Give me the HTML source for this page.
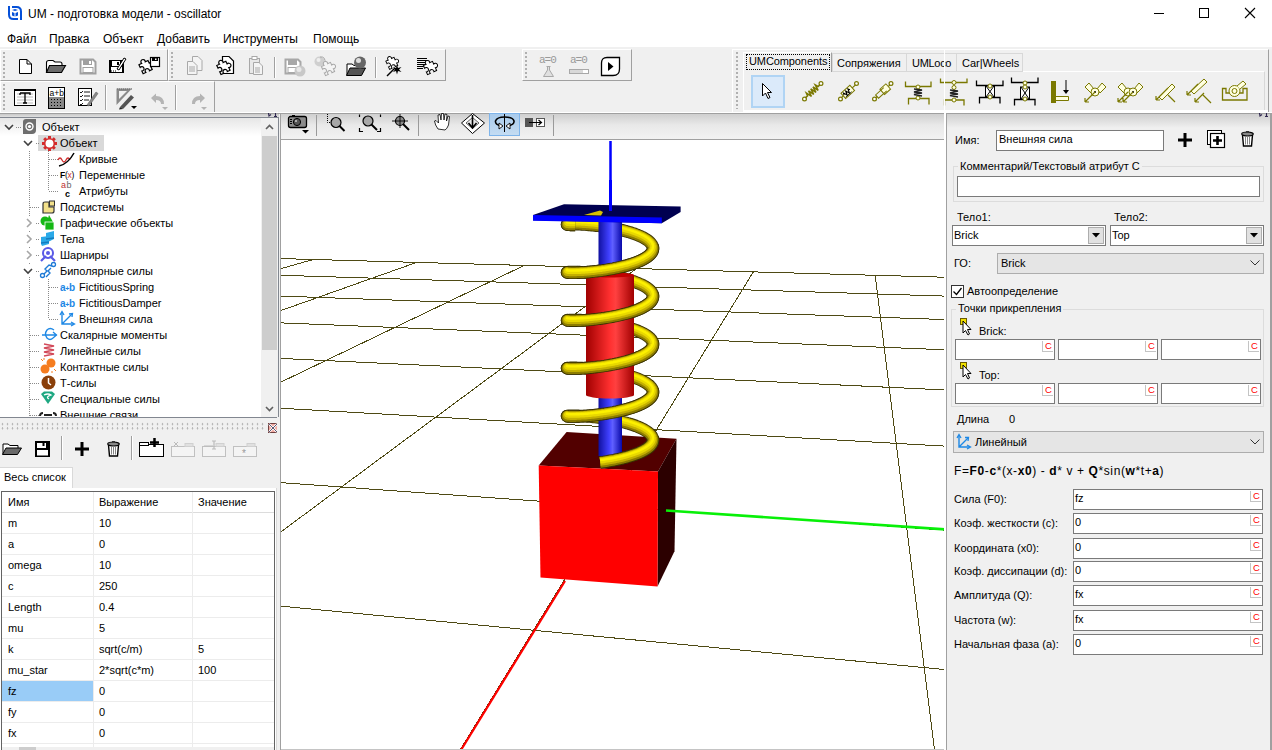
<!DOCTYPE html>
<html><head><meta charset="utf-8">
<style>
*{box-sizing:border-box;margin:0;padding:0}
html,body{width:1272px;height:750px;overflow:hidden;background:#f0f0f0;font-family:"Liberation Sans",sans-serif;font-size:11px;color:#000}
.a{position:absolute}
.t{position:absolute;white-space:nowrap;line-height:13px}
.m{font-size:12px;line-height:14px}
svg{position:absolute;overflow:visible}
.inp{position:absolute;background:#fff;border:1px solid #7a7a7a}
.cc{position:absolute;width:11px;height:11px;border-left:1px solid #c4c4c4;border-bottom:1px solid #c4c4c4;background:#fff;color:#f00;font-size:9.5px;line-height:9px;padding-left:2px}
.sep{position:absolute;width:1px;background:#a0a0a0}
.grip{position:absolute;width:3px;background-image:linear-gradient(#a8a8a8 50%,transparent 50%);background-size:2px 4px}
</style></head><body>

<div class="a" style="left:0;top:0;width:1272px;height:47px;background:#fff"></div>
<svg style="left:8px;top:6px" width="14" height="14" viewBox="0 0 14 14"><path d="M1 0 V8.5 Q1 13 5.5 13 H10" stroke="#0550d8" stroke-width="2" fill="none"/><path d="M4 1 H8.5 Q13 1 13 5.5 V14" stroke="#0550d8" stroke-width="2" fill="none"/><path d="M4 4 L7 3 L10 4 L7 5 Z" fill="#0550d8"/><path d="M4 6 L6.5 7 V10.5 L4 9.5 Z M10 6 L7.5 7 V10.5 L10 9.5 Z" fill="#0550d8"/></svg>
<div class="t m" style="left:28px;top:7px">UM - подготовка модели - oscillator</div>
<svg style="left:1154px;top:13px" width="10" height="1"><rect x="0" y="0" width="10" height="1" fill="#000"/></svg>
<svg style="left:1199px;top:8px" width="10" height="10"><rect x="0.5" y="0.5" width="9" height="9" fill="none" stroke="#000"/></svg>
<svg style="left:1245px;top:8px" width="10" height="10"><path d="M0 0 L10 10 M10 0 L0 10" stroke="#000" stroke-width="1.1"/></svg>
<div class="t m" style="left:7px;top:32px">Файл</div>
<div class="t m" style="left:49px;top:32px">Правка</div>
<div class="t m" style="left:103px;top:32px">Объект</div>
<div class="t m" style="left:157px;top:32px">Добавить</div>
<div class="t m" style="left:223px;top:32px">Инструменты</div>
<div class="t m" style="left:313px;top:32px">Помощь</div>
<div class="a" style="left:0px;top:49px;width:168px;height:32px;background:#f0f0f0;border-top:1px solid #fff;border-left:1px solid #fff;border-bottom:1px solid #a0a0a0;border-right:1px solid #a0a0a0"></div><div class="a" style="left:3px;top:52px;width:2px;height:26px;background-image:linear-gradient(#b0b0b0 50%,transparent 50%);background-size:2px 4px"></div><div class="a" style="left:168px;top:49px;width:278px;height:32px;background:#f0f0f0;border-top:1px solid #fff;border-left:1px solid #fff;border-bottom:1px solid #a0a0a0;border-right:1px solid #a0a0a0"></div><div class="a" style="left:171px;top:52px;width:2px;height:26px;background-image:linear-gradient(#b0b0b0 50%,transparent 50%);background-size:2px 4px"></div><div class="a" style="left:522px;top:49px;width:110px;height:32px;background:#f0f0f0;border-top:1px solid #fff;border-left:1px solid #fff;border-bottom:1px solid #a0a0a0;border-right:1px solid #a0a0a0"></div><div class="a" style="left:525px;top:52px;width:2px;height:26px;background-image:linear-gradient(#b0b0b0 50%,transparent 50%);background-size:2px 4px"></div><div class="a" style="left:0px;top:81px;width:215px;height:32px;background:#f0f0f0;border-top:1px solid #fff;border-left:1px solid #fff;border-bottom:1px solid #a0a0a0;border-right:1px solid #a0a0a0"></div><div class="a" style="left:3px;top:84px;width:2px;height:26px;background-image:linear-gradient(#b0b0b0 50%,transparent 50%);background-size:2px 4px"></div><svg style="left:19px;top:59px" width="13" height="15" viewBox="0 0 13 15"><path d="M0.5 0.5 H8 L12.5 5 V14.5 H0.5 Z" fill="#fff" stroke="#000"/><path d="M8 0.5 V5 H12.5" fill="none" stroke="#000"/></svg><svg style="left:46px;top:60px" width="21" height="13" viewBox="0 0 21 13"><path d="M0.5 12 V2.5 Q0.5 0.5 3 0.5 H7 L9 2 H14 Q16 2 16 4 V6" fill="#fff" stroke="#000" stroke-width="1.1"/><path d="M0.5 12.5 L3.5 5.5 H19.5 L15.5 12.5 Z" fill="#6a6a6a" stroke="#000" stroke-width="1.1"/></svg><svg style="left:80px;top:59px" width="16" height="15" viewBox="0 0 16 15"><path d="M0.5 0.5 H13 L15.5 3 V14.5 H0.5 Z" fill="#fff" stroke="#a0a0a0" stroke-width="2"/><rect x="3" y="1" width="9" height="5" fill="#a0a0a0"/><rect x="9" y="2" width="2" height="3" fill="#fff"/><rect x="3" y="8.5" width="10" height="5" fill="#fff" stroke="#a0a0a0"/></svg><svg style="left:108px;top:56px" width="19" height="18" viewBox="0 0 19 18"><rect x="1" y="4" width="15" height="13" fill="#000"/><rect x="4" y="5" width="8" height="5" fill="#fff"/><rect x="9" y="6" width="2" height="3" fill="#000"/><rect x="3" y="11" width="11" height="5" fill="#fff"/><path d="M3 15 h1 M5 15 h1 M7 15 h1" stroke="#000"/><path d="M9 13 L16 2 L18 3 L11 14 Z" fill="#fff" stroke="#000"/></svg><svg style="left:138px;top:57px" width="23" height="19" viewBox="0 0 23 19"><path d="M3 6 H6 A2.2 2.2 0 1 1 10 6 H13 V9 A2.2 2.2 0 1 1 13 13 V16 H10 A2.2 2.2 0 1 0 6 16 H3 V13 A2.2 2.2 0 1 0 3 9 Z" fill="#fff" stroke="#000" stroke-width="1.2" transform="rotate(-25 8 11) translate(0,-1)"/><rect x="12.5" y="0.5" width="9" height="9" fill="#fff" stroke="#000" stroke-width="1.2"/><rect x="14" y="1" width="6" height="3" fill="#000"/><rect x="17" y="1.5" width="1.5" height="1.5" fill="#fff"/></svg><div class="a" style="left:274px;top:57px;width:1px;height:21px;background:#a0a0a0"></div><div class="a" style="left:275px;top:57px;width:1px;height:21px;background:#fff"></div><div class="a" style="left:375px;top:57px;width:1px;height:21px;background:#a0a0a0"></div><div class="a" style="left:376px;top:57px;width:1px;height:21px;background:#fff"></div><svg style="left:187px;top:56px" width="16" height="19" viewBox="0 0 16 19"><path d="M5.5 0.5 H11 L15 4.5 V14.5 H5.5 Z" fill="#f4f4f4" stroke="#a8a8a8"/><path d="M0.5 5.5 H6 L10 9.5 V18.5 H0.5 Z" fill="#f4f4f4" stroke="#a8a8a8"/><path d="M2 11 h6 M2 13 h6 M2 15 h6" stroke="#a8a8a8"/></svg><svg style="left:215px;top:56px" width="20" height="20" viewBox="0 0 20 20"><path d="M7.5 0.5 H14 L18.5 5 V17.5 H7.5 Z" fill="#fff" stroke="#000" stroke-width="1.2"/><path d="M3 6 H6 A2.2 2.2 0 1 1 10 6 H13 V9 A2.2 2.2 0 1 1 13 13 V16 H10 A2.2 2.2 0 1 0 6 16 H3 V13 A2.2 2.2 0 1 0 3 9 Z" fill="#fff" stroke="#000" stroke-width="1.2" transform="rotate(-25 8 11) translate(0,1)"/></svg><svg style="left:249px;top:56px" width="14" height="19" viewBox="0 0 14 19"><rect x="0.5" y="2.5" width="10" height="15" fill="#e8e8e8" stroke="#a8a8a8"/><rect x="3" y="0.5" width="5" height="3" fill="#fff" stroke="#a8a8a8"/><path d="M4.5 6.5 H10 L13.5 10 V18.5 H4.5 Z" fill="#f4f4f4" stroke="#a8a8a8"/><path d="M6 12 h5 M6 14 h5 M6 16 h5" stroke="#a8a8a8"/></svg><svg style="left:285px;top:59px" width="21" height="18" viewBox="0 0 21 18"><path d="M0.5 0.5 H13 L15.5 3 V14.5 H0.5 Z" fill="#fff" stroke="#a8a8a8" stroke-width="2"/><rect x="3" y="1" width="9" height="5" fill="#a8a8a8"/><rect x="3" y="8.5" width="10" height="5" fill="#fff" stroke="#a8a8a8"/><circle cx="15" cy="12" r="5.5" fill="#c8c8c8"/><circle cx="14" cy="10.5" r="2.5" fill="#e8e8e8"/></svg><svg style="left:314px;top:56px" width="23" height="21" viewBox="0 0 23 21"><circle cx="5.5" cy="5.5" r="5" fill="#cfcfcf"/><circle cx="4.5" cy="4" r="2" fill="#eee"/><path d="M6 1 Q12 0 11 8" fill="none" stroke="#a8a8a8"/><path d="M9 7 L11 11 L13 7" fill="#a8a8a8"/><path d="M3 6 H6 A2.2 2.2 0 1 1 10 6 H13 V9 A2.2 2.2 0 1 1 13 13 V16 H10 A2.2 2.2 0 1 0 6 16 H3 V13 A2.2 2.2 0 1 0 3 9 Z" fill="#f4f4f4" stroke="#a8a8a8" transform="translate(6,2) rotate(-25 8 11)"/></svg><svg style="left:346px;top:56px" width="21" height="20" viewBox="0 0 21 20"><path d="M1 19 L1 8 L6 8 L8 9.5 L12 9.5" fill="#fff" stroke="#000"/><path d="M0.5 19.5 L4 12 L19.5 12 L15.5 19.5 Z" fill="#555" stroke="#000"/><circle cx="14" cy="6.5" r="6" fill="#666"/><circle cx="12.5" cy="4.5" r="2.5" fill="#ddd"/></svg><svg style="left:385px;top:56px" width="19" height="21" viewBox="0 0 19 21"><path d="M3 6 H6 A2.2 2.2 0 1 1 10 6 H13 V9 A2.2 2.2 0 1 1 13 13 V16 H10 A2.2 2.2 0 1 0 6 16 H3 V13 A2.2 2.2 0 1 0 3 9 Z" fill="#fff" stroke="#000" transform="translate(0,-3) rotate(-25 8 11) scale(0.9)"/><path d="M2 20 L10 12" stroke="#000" stroke-width="1.5"/><path d="M12 9 L13 12 L16.5 11 L14 13.5 L16.5 16 L13 15 L12 18.5 L11 15 L8 16 L10 13.5 L8 11 L11 12 Z" fill="#000"/></svg><svg style="left:417px;top:57px" width="21" height="19" viewBox="0 0 21 19"><path d="M0 1.5 h10 M0 3.5 h10 M0 5.5 h10 M0 7.5 h10 M0 9.5 h8 M0 11.5 h6" stroke="#000"/><path d="M3 6 H6 A2.2 2.2 0 1 1 10 6 H13 V9 A2.2 2.2 0 1 1 13 13 V16 H10 A2.2 2.2 0 1 0 6 16 H3 V13 A2.2 2.2 0 1 0 3 9 Z" fill="#fff" stroke="#000" transform="translate(5,0) rotate(-25 8 11)"/></svg><div class="t" style="left:539px;top:55px;font-family:&quot;Liberation Mono&quot;,monospace;font-size:11px;color:#999;letter-spacing:-1px;line-height:11px">a=0</div><svg style="left:543px;top:66px" width="11" height="11" viewBox="0 0 11 11"><path d="M3.5 0.5 h4 M4.5 0.5 V4 L0.5 10.5 H10.5 L6.5 4 V0.5" fill="#e0e0e0" stroke="#a8a8a8"/></svg><div class="t" style="left:570px;top:55px;font-family:&quot;Liberation Mono&quot;,monospace;font-size:11px;color:#999;letter-spacing:-1px;line-height:11px">a=0</div><svg style="left:569px;top:69px" width="20" height="5" viewBox="0 0 20 5"><rect x="0.5" y="0.5" width="19" height="4" fill="#fff" stroke="#a8a8a8"/><rect x="1" y="1" width="13" height="3" fill="#d8d8d8"/></svg><svg style="left:601px;top:57px" width="19" height="19" viewBox="0 0 19 19"><path d="M6 0.5 H18.5 V12 Q18.5 18.5 12 18.5 H0.5 V6 Q0.5 0.5 6 0.5 Z" fill="#fff" stroke="#000" stroke-width="1.3"/><path d="M7 5 L12.5 9.5 L7 14 Z" fill="#000"/></svg><svg style="left:14px;top:89px" width="23" height="18" viewBox="0 0 23 18"><rect x="0.5" y="0.5" width="21" height="16" fill="#fff" stroke="#000"/><rect x="0" y="0" width="22" height="2" fill="#000"/><path d="M3 5 h16 M3 8 h16 M3 11 h16 M3 14 h16" stroke="#bbb"/><path d="M6 4 H16 V6 M6 4 V6 M11 4 V14 M9 14 H13" fill="none" stroke="#000" stroke-width="1.3"/></svg><svg style="left:48px;top:87px" width="18" height="22" viewBox="0 0 18 22"><rect x="0.5" y="0.5" width="16" height="21" fill="#fff" stroke="#000"/><rect x="1" y="10" width="15" height="11" fill="#888"/><text x="1.5" y="9" font-size="8.5" font-family="Liberation Sans">a+b</text><path d="M3 12.5 h1 M6 12.5 h1 M9 12.5 h1 M12 12.5 h1 M3 15.5 h1 M6 15.5 h1 M9 15.5 h1 M12 15.5 h1 M3 18.5 h1 M6 18.5 h1 M9 18.5 h1 M12 18.5 h1" stroke="#000" stroke-width="1.2"/></svg><svg style="left:78px;top:88px" width="21" height="19" viewBox="0 0 21 19"><rect x="0.5" y="0.5" width="13" height="17" fill="#fff" stroke="#000"/><path d="M2 4 l1 1 l2 -2 M2 8 l1 1 l2 -2 M2 12 l1 1 l2 -2 M2 16 l1 1 l2 -2 M6 4 h6 M6 8 h6 M6 12 h5" fill="none" stroke="#000" stroke-width="0.9"/><path d="M9 17 L18 4 L20 5.5 L11 18 Z" fill="#888" stroke="#666" stroke-width="0.6"/></svg><div class="a" style="left:105px;top:85px;width:1px;height:25px;background:#a0a0a0"></div><div class="a" style="left:106px;top:85px;width:1px;height:25px;background:#fff"></div><svg style="left:116px;top:88px" width="22" height="22" viewBox="0 0 22 22"><path d="M0.5 0.5 H16 L0.5 17 Z" fill="#8a8a8a"/><path d="M3 3 H11 L3 11 Z" fill="#f0f0f0"/><path d="M1 1 h15" stroke="#666" stroke-dasharray="1 1"/><path d="M4 19 L15 7 L18 9.5 L7 21 Z" fill="#555"/><path d="M4 19 L3 21.5 L7 21 Z" fill="#222"/><path d="M15 18 h6 l-3 3 z" fill="#000"/></svg><svg style="left:149px;top:93px" width="20" height="17" viewBox="0 0 20 17"><path d="M2 5 L7 0.5 L7 3 Q15 3 15 11 L12 11 Q12 7 7 7 L7 10 Z" fill="#b4b4b4"/><path d="M13 14 h6 l-3 3 z" fill="#b4b4b4"/></svg><div class="a" style="left:175px;top:85px;width:1px;height:25px;background:#a0a0a0"></div><div class="a" style="left:176px;top:85px;width:1px;height:25px;background:#fff"></div><svg style="left:188px;top:93px" width="20" height="17" viewBox="0 0 20 17"><path d="M17 5 L12 0.5 L12 3 Q4 3 4 11 L7 11 Q7 7 12 7 L12 10 Z" fill="#b4b4b4"/><path d="M13 14 h6 l-3 3 z" fill="#b4b4b4"/></svg><div class="a" style="left:732px;top:49px;width:537px;height:63px;background:#f0f0f0;border-top:1px solid #fff;border-left:1px solid #fff;border-right:1px solid #a0a0a0"></div><div class="a" style="left:736px;top:52px;width:2px;height:57px;background-image:linear-gradient(#b0b0b0 50%,transparent 50%);background-size:2px 4px"></div><div class="a" style="left:743px;top:71px;width:522px;height:39px;background:#f0f0f0;border-top:1px solid #fff;border-left:1px solid #fff;border-right:1px solid #d8d8d8"></div><div class="a" style="left:832px;top:53px;width:75px;height:19px;border:1px solid #d8d8d8;background:#f0f0f0"></div><div class="a" style="left:906px;top:53px;width:51px;height:19px;border:1px solid #d8d8d8;background:#f0f0f0"></div><div class="a" style="left:956px;top:53px;width:67px;height:19px;border:1px solid #d8d8d8;background:#f0f0f0"></div><div class="a" style="left:743px;top:52px;width:89px;height:20px;border:1px solid #fff;border-right:1px solid #a0a0a0;border-bottom:none;background:#f0f0f0"></div><div class="a" style="left:746px;top:54px;width:84px;height:16px;border:1px dotted #000"></div><div class="t" style="left:749px;top:55px;font-size:11px;letter-spacing:-0.1px">UMComponents</div><div class="t" style="left:837px;top:57px;font-size:11px">Сопряжения</div><div class="t" style="left:912px;top:57px;font-size:11px;letter-spacing:-0.3px">UMLoco</div><div class="t" style="left:962px;top:57px;font-size:11px">Car|Wheels</div><div class="a" style="left:751px;top:75px;width:34px;height:33px;border:2px solid #b0d4f4;background:#dbeafa;background-image:radial-gradient(circle,#fff 0.6px,transparent 0.7px);background-size:2px 2px"></div><svg style="left:762px;top:83px" width="12" height="17" viewBox="0 0 12 17"><path d="M0.5 0.5 L0.5 13 L3.5 10 L6 15.5 L8 14.5 L5.5 9.5 L9.5 9.5 Z" fill="#fff" stroke="#000"/></svg><svg style="left:802px;top:81px" width="22" height="21" viewBox="0 0 22 21"><circle cx="2.5" cy="18" r="1.9" fill="#fff" stroke="#7a7800" stroke-width="1.2"/><circle cx="19" cy="2.5" r="1.9" fill="#fff" stroke="#7a7800" stroke-width="1.2"/><g transform="translate(10.8,10.2) rotate(-42)"><path d="M-10 0 H-7 L-6 -3 L-4.5 3 L-3 -3 L-1.5 3 L0 -3 L1.5 3 L3 -3 L4.5 3 L6 -3 L7 0 H9.5" fill="none" stroke="#7a7800" stroke-width="1.5"/></g></svg><svg style="left:838px;top:81px" width="21" height="21" viewBox="0 0 21 21"><circle cx="2.5" cy="18" r="1.9" fill="#fff" stroke="#7a7800" stroke-width="1.2"/><circle cx="18.5" cy="2.5" r="1.9" fill="#fff" stroke="#7a7800" stroke-width="1.2"/><g transform="translate(10.5,10.2) rotate(-42)"><path d="M-10 0 H-7 M5 0 H9.5" stroke="#7a7800" stroke-width="1.2"/><rect x="-7" y="-3.5" width="12" height="7" fill="#ffffe0" stroke="#7a7800"/><path d="M-6 0 L-5 -2 L-3.5 2 L-2 -2 L-0.5 2 L1 -2 L2 0" fill="none" stroke="#000" stroke-width="1.1"/><path d="M-6 2.5 h8" stroke="#000" stroke-width="0.8"/></g></svg><svg style="left:872px;top:81px" width="22" height="21" viewBox="0 0 22 21"><circle cx="2.5" cy="18" r="1.9" fill="#fff" stroke="#7a7800" stroke-width="1.2"/><circle cx="19" cy="2.5" r="1.9" fill="#fff" stroke="#7a7800" stroke-width="1.2"/><g transform="translate(11,10.2) rotate(-42)"><path d="M-10 0 H-8 M7 0 H9.5" stroke="#7a7800" stroke-width="1.2"/><rect x="-1" y="-3.5" width="8" height="7" fill="#ffffe0" stroke="#7a7800"/><path d="M3 -2.2 H-8 V2.2 H3" fill="none" stroke="#7a7800" stroke-width="1"/></g></svg><svg style="left:905px;top:81px" width="27" height="24" viewBox="0 0 27 24"><path d="M0.5 0.5 V5.5 H26 V0.5 M3.5 23.5 V17.5 H24 V23.5" fill="none" stroke="#7a7800" stroke-width="1.3"/><circle cx="13" cy="6" r="2" fill="#ffffe0" stroke="#7a7800"/><circle cx="13" cy="17" r="2" fill="#ffffe0" stroke="#7a7800"/><path d="M9 8 L17 9 L9 11 L17 12 L9 13.5 L17 15" fill="none" stroke="#222" stroke-width="1.4"/></svg><svg style="left:940px;top:78px" width="28" height="28" viewBox="0 0 28 28"><path d="M0.5 0.5 V4.5 H27 V0.5 M4.5 27.5 V22 H24 V27.5" fill="none" stroke="#7a7800" stroke-width="1.3"/><circle cx="14" cy="4.5" r="2" fill="#ffffe0" stroke="#7a7800"/><circle cx="14" cy="9.5" r="2" fill="#ffffe0" stroke="#7a7800"/><circle cx="14" cy="22" r="2" fill="#ffffe0" stroke="#7a7800"/><path d="M10 12 L18 13 L10 15 L18 16 L10 17.5 L18 19" fill="none" stroke="#222" stroke-width="1.4"/></svg><svg style="left:976px;top:80px" width="28" height="24" viewBox="0 0 28 24"><path d="M0.5 0.5 V5.5 H27 V0.5 M3.5 23.5 V17.5 H24 V23.5" fill="none" stroke="#000" stroke-width="1.3"/><rect x="9.5" y="6" width="9" height="11" fill="#fff" stroke="#000"/><path d="M10 6 L18 17 M18 6 L10 17" stroke="#000"/><circle cx="14" cy="6" r="2" fill="#ffffe0" stroke="#7a7800"/><circle cx="14" cy="17" r="2" fill="#ffffe0" stroke="#7a7800"/></svg><svg style="left:1011px;top:77px" width="28" height="29" viewBox="0 0 28 29"><path d="M0.5 0.5 V5.5 H27 V0.5 M3.5 28.5 V22.5 H24 V28.5" fill="none" stroke="#000" stroke-width="1.3"/><rect x="9.5" y="10" width="9" height="12" fill="#fff" stroke="#000"/><path d="M10 10 L18 22 M18 10 L10 22" stroke="#000"/><circle cx="14" cy="6" r="2" fill="#ffffe0" stroke="#7a7800"/><circle cx="14" cy="10" r="2" fill="#ffffe0" stroke="#7a7800"/><circle cx="14" cy="22" r="2" fill="#ffffe0" stroke="#7a7800"/></svg><svg style="left:1051px;top:80px" width="19" height="24" viewBox="0 0 19 24"><rect x="0" y="1" width="5" height="22" fill="#7a7800"/><path d="M5 16.5 H17.5 V20.5 H5" fill="#ffffe0" stroke="#7a7800"/><path d="M15 0 V12" stroke="#000"/><path d="M12 10 L15 14 L18 10 Z" fill="#000"/></svg><svg style="left:1083px;top:82px" width="24" height="22" viewBox="0 0 24 22"><path d="M2 5 L6 1 L11 7 L8 11 Z M14 7 L19 1 L23 5 L17 11 Z" fill="#ffffe0" stroke="#7a7800"/><circle cx="12" cy="10" r="4" fill="#ffffe0" stroke="#7a7800"/><circle cx="12" cy="10" r="1" fill="#000"/><path d="M12 10 L2 20 M2 20 h4 M2 20 v-4" fill="none" stroke="#7a7800" stroke-width="1.2"/></svg><svg style="left:1116px;top:82px" width="28" height="22" viewBox="0 0 28 22"><path d="M2 5 L6 1 L11 7 L8 11 Z M18 7 L23 1 L27 5 L21 11 Z" fill="#ffffe0" stroke="#7a7800"/><circle cx="12" cy="10" r="4" fill="#ffffe0" stroke="#7a7800"/><circle cx="17" cy="10" r="4" fill="#ffffe0" stroke="#7a7800"/><circle cx="17" cy="10" r="1" fill="#000"/><path d="M12 10 L2 20 M2 20 h4 M2 20 v-4 M17 10 L7 20 M7 20 h4 M7 20 v-4" fill="none" stroke="#7a7800" stroke-width="1.2"/></svg><svg style="left:1154px;top:81px" width="23" height="23" viewBox="0 0 23 23"><path d="M5 16 L18 3 L21 6 L8 19 Z" fill="#ffffe0" stroke="#7a7800"/><path d="M2 19 L14 7 M2 19 h4 M2 19 v-4 M14 14 L21 21" fill="none" stroke="#7a7800" stroke-width="1.2"/></svg><svg style="left:1186px;top:78px" width="27" height="27" viewBox="0 0 27 27"><path d="M5 13 L18 1 L21 4 L8 16 Z" fill="#ffffe0" stroke="#7a7800"/><path d="M1 17 L12 6 M1 17 h4 M1 17 v-4 M9 24 L18 15 M9 24 h4 M9 24 v-4 M17 17 L25 25" fill="none" stroke="#7a7800" stroke-width="1.2"/></svg><svg style="left:1222px;top:80px" width="26" height="21" viewBox="0 0 26 21"><path d="M0.5 8.5 V20 H25 V8.5 H21 V13 H4 V8.5 Z" fill="none" stroke="#7a7800" stroke-width="1.3"/><circle cx="12.5" cy="11" r="5.5" fill="#ffffe0" stroke="#7a7800"/><circle cx="12.5" cy="11" r="2.5" fill="none" stroke="#7a7800"/><path d="M15 6 L21 1 L24 4 L18 9" fill="#ffffe0" stroke="#7a7800"/></svg><div class="a" style="left:743px;top:110px;width:525px;height:2px;background:#fff"></div><div class="a" style="left:944px;top:49px;width:1px;height:64px;background:#fff"></div><div class="a" style="left:0;top:112px;width:1272px;height:1px;background:#fff"></div><div class="a" style="left:0;top:113px;width:1272px;height:1px;background:#a0a0a0"></div><div class="a" style="left:0;top:114px;width:280px;height:4px;background:linear-gradient(#c8c8c8,#e8e8e8)"></div><svg style="left:268px;top:113px" width="10" height="4" viewBox="0 0 10 4"><path d="M0.5 0 L1 3 L3 1.5 M6 3.5 H9 M7.5 3.5 V1 M7 0.5 h1" fill="none" stroke="#302850" stroke-width="1.2"/></svg><div class="a" style="left:0;top:117px;width:279px;height:301px;background:#fff;border:1px solid #828790;border-left:none"></div><div class="a" style="left:0;top:118px;width:261px;height:18px;background:linear-gradient(#e6e6e6,#fff)"></div><div class="a" style="left:261px;top:118px;width:17px;height:299px;background:#f0f0f0"></div><div class="a" style="left:262px;top:136px;width:15px;height:214px;background:#cdcdcd"></div><svg style="left:265px;top:124px" width="9" height="6" viewBox="0 0 9 6"><path d="M1 5 L4.5 1.5 L8 5" fill="none" stroke="#606060" stroke-width="1.6"/></svg><svg style="left:265px;top:406px" width="9" height="6" viewBox="0 0 9 6"><path d="M1 1 L4.5 4.5 L8 1" fill="none" stroke="#606060" stroke-width="1.6"/></svg><div class="a" style="left:38px;top:135px;width:66px;height:16px;background:#d9d9d9"></div><div class="a" style="left:16px;top:127px;width:6px;height:1px;background-image:linear-gradient(90deg,#8a8a8a 50%,transparent 50%);background-size:2px 1px"></div><div class="a" style="left:29px;top:151px;width:1px;height:266px;background-image:linear-gradient(#8a8a8a 50%,transparent 50%);background-size:1px 2px"></div><div class="a" style="left:36px;top:143px;width:4px;height:1px;background-image:linear-gradient(90deg,#8a8a8a 50%,transparent 50%);background-size:2px 1px"></div><div class="a" style="left:48px;top:151px;width:1px;height:40px;background-image:linear-gradient(#8a8a8a 50%,transparent 50%);background-size:1px 2px"></div><div class="a" style="left:49px;top:159px;width:9px;height:1px;background-image:linear-gradient(90deg,#8a8a8a 50%,transparent 50%);background-size:2px 1px"></div><div class="a" style="left:49px;top:175px;width:9px;height:1px;background-image:linear-gradient(90deg,#8a8a8a 50%,transparent 50%);background-size:2px 1px"></div><div class="a" style="left:49px;top:191px;width:9px;height:1px;background-image:linear-gradient(90deg,#8a8a8a 50%,transparent 50%);background-size:2px 1px"></div><div class="a" style="left:30px;top:207px;width:10px;height:1px;background-image:linear-gradient(90deg,#8a8a8a 50%,transparent 50%);background-size:2px 1px"></div><div class="a" style="left:30px;top:351px;width:10px;height:1px;background-image:linear-gradient(90deg,#8a8a8a 50%,transparent 50%);background-size:2px 1px"></div><div class="a" style="left:30px;top:367px;width:10px;height:1px;background-image:linear-gradient(90deg,#8a8a8a 50%,transparent 50%);background-size:2px 1px"></div><div class="a" style="left:30px;top:383px;width:10px;height:1px;background-image:linear-gradient(90deg,#8a8a8a 50%,transparent 50%);background-size:2px 1px"></div><div class="a" style="left:30px;top:399px;width:10px;height:1px;background-image:linear-gradient(90deg,#8a8a8a 50%,transparent 50%);background-size:2px 1px"></div><div class="a" style="left:30px;top:415px;width:10px;height:1px;background-image:linear-gradient(90deg,#8a8a8a 50%,transparent 50%);background-size:2px 1px"></div><div class="a" style="left:36px;top:223px;width:4px;height:1px;background-image:linear-gradient(90deg,#8a8a8a 50%,transparent 50%);background-size:2px 1px"></div><div class="a" style="left:36px;top:239px;width:4px;height:1px;background-image:linear-gradient(90deg,#8a8a8a 50%,transparent 50%);background-size:2px 1px"></div><div class="a" style="left:36px;top:255px;width:4px;height:1px;background-image:linear-gradient(90deg,#8a8a8a 50%,transparent 50%);background-size:2px 1px"></div><div class="a" style="left:36px;top:271px;width:4px;height:1px;background-image:linear-gradient(90deg,#8a8a8a 50%,transparent 50%);background-size:2px 1px"></div><div class="a" style="left:36px;top:335px;width:4px;height:1px;background-image:linear-gradient(90deg,#8a8a8a 50%,transparent 50%);background-size:2px 1px"></div><div class="a" style="left:30px;top:335px;width:10px;height:1px;background-image:linear-gradient(90deg,#8a8a8a 50%,transparent 50%);background-size:2px 1px"></div><div class="a" style="left:48px;top:279px;width:1px;height:40px;background-image:linear-gradient(#8a8a8a 50%,transparent 50%);background-size:1px 2px"></div><div class="a" style="left:49px;top:287px;width:9px;height:1px;background-image:linear-gradient(90deg,#8a8a8a 50%,transparent 50%);background-size:2px 1px"></div><div class="a" style="left:49px;top:303px;width:9px;height:1px;background-image:linear-gradient(90deg,#8a8a8a 50%,transparent 50%);background-size:2px 1px"></div><div class="a" style="left:49px;top:319px;width:9px;height:1px;background-image:linear-gradient(90deg,#8a8a8a 50%,transparent 50%);background-size:2px 1px"></div><svg style="left:4px;top:124px" width="10" height="6" viewBox="0 0 10 6"><path d="M1 1 L5 5 L9 1" fill="none" stroke="#404040" stroke-width="1.6"/></svg><svg style="left:23px;top:140px" width="10" height="6" viewBox="0 0 10 6"><path d="M1 1 L5 5 L9 1" fill="none" stroke="#404040" stroke-width="1.6"/></svg><div class="a" style="left:24px;top:216px;width:10px;height:14px;background:#fff"></div><svg style="left:26px;top:218px" width="6" height="10" viewBox="0 0 6 10"><path d="M1 1 L5 5 L1 9" fill="none" stroke="#a6a6a6" stroke-width="1.6"/></svg><div class="a" style="left:24px;top:232px;width:10px;height:14px;background:#fff"></div><svg style="left:26px;top:234px" width="6" height="10" viewBox="0 0 6 10"><path d="M1 1 L5 5 L1 9" fill="none" stroke="#a6a6a6" stroke-width="1.6"/></svg><div class="a" style="left:24px;top:248px;width:10px;height:14px;background:#fff"></div><svg style="left:26px;top:250px" width="6" height="10" viewBox="0 0 6 10"><path d="M1 1 L5 5 L1 9" fill="none" stroke="#a6a6a6" stroke-width="1.6"/></svg><div class="a" style="left:22px;top:265px;width:12px;height:12px;background:#fff"></div><svg style="left:23px;top:268px" width="10" height="6" viewBox="0 0 10 6"><path d="M1 1 L5 5 L9 1" fill="none" stroke="#404040" stroke-width="1.6"/></svg><svg style="left:23px;top:119px" width="13" height="15" viewBox="0 0 13 15"><path d="M0 3 Q0 0 3 0 L13 0 L13 11 Q13 15 9 15 L0 15 Z" fill="#6e6e6e"/><circle cx="6.5" cy="7.5" r="3.5" fill="none" stroke="#fff" stroke-width="1.4"/><circle cx="6.5" cy="7.5" r="1.6" fill="#fff"/></svg><svg style="left:42px;top:136px" width="15" height="15" viewBox="0 0 15 15"><g fill="#d42a2a"><rect x="6" y="0" width="3" height="15"/><rect x="0" y="6" width="15" height="3"/><rect x="6" y="0" width="3" height="15" transform="rotate(45 7.5 7.5)"/><rect x="6" y="0" width="3" height="15" transform="rotate(-45 7.5 7.5)"/></g><circle cx="7.5" cy="7.5" r="4.8" fill="#fff" stroke="#d42a2a" stroke-width="1.6"/><circle cx="7.5" cy="7.5" r="2.6" fill="#fff"/></svg><svg style="left:58px;top:152px" width="17" height="15" viewBox="0 0 17 15"><path d="M0 8 q2 -4 4 0 t4 0 t4 0" fill="none" stroke="#d03030" stroke-width="1.3"/><path d="M1 14 Q10 12 16 1" fill="none" stroke="#000" stroke-width="1.5"/></svg><div class="t" style="left:60px;top:169px;font-size:8.5px;font-weight:bold;letter-spacing:-0.3px">F<span style="font-weight:normal">(</span><span style="color:#d03030;font-weight:normal">x</span><span style="font-weight:normal">)</span></div><div class="t" style="left:61px;top:181px;font-size:9px;line-height:9px;color:#c03030;letter-spacing:0.5px">a<span style="color:#666">b</span></div><div class="t" style="left:65px;top:190px;font-size:9px;line-height:9px;font-weight:bold">c</div><svg style="left:42px;top:200px" width="14" height="14" viewBox="0 0 14 14"><path d="M1 4 Q1 2 3 2 L7 2 L7 7 L12 7 L12 11 Q12 13 10 13 L1 13 Z" fill="#f2e08a" stroke="#333" stroke-width="1.2"/><rect x="7.5" y="1" width="5" height="5" fill="#f2e08a" stroke="#333"/></svg><svg style="left:40px;top:215px" width="16" height="16" viewBox="0 0 16 16"><circle cx="5" cy="6" r="4.5" fill="#14b814"/><path d="M9 0 L13 7 L7 7 Z" fill="#14b814"/><rect x="5" y="7" width="9" height="8" fill="#14b814" stroke="#fff" stroke-width="0.8"/></svg><svg style="left:40px;top:231px" width="16" height="16" viewBox="0 0 16 16"><path d="M6 2 L14 0 L14 8 L8 11 L6 9 Z" fill="#2aa9e8"/><path d="M1 6 L9 5 L9 13 L2 15 L1 13 Z" fill="#2aa9e8"/><path d="M1 12 L9 11 M6 8 L14 7" stroke="#147cbf" stroke-width="1.5"/></svg><svg style="left:41px;top:247px" width="15" height="15" viewBox="0 0 15 15"><circle cx="7" cy="6" r="5" fill="none" stroke="#5a5ae6" stroke-width="2"/><circle cx="7" cy="6" r="2" fill="#5a5ae6"/><path d="M0 14 L5 9 M14 14 L9 9" stroke="#5a5ae6" stroke-width="2.2"/></svg><svg style="left:40px;top:262px" width="16" height="16" viewBox="0 0 16 16"><circle cx="2.5" cy="13.5" r="2" fill="none" stroke="#1e7ad6" stroke-width="1.3"/><circle cx="13.5" cy="2.5" r="2" fill="none" stroke="#1e7ad6" stroke-width="1.3"/><path d="M4 12 L7 9 L5 7 L9 3 L12 4 M11 6 L8 9 L10 11 L6 15" fill="none" stroke="#1e7ad6" stroke-width="1.4"/></svg><div class="t" style="left:60px;top:281px;font-size:10px;color:#1e88e5;font-weight:bold;letter-spacing:-0.3px">a<span style="font-size:7px">+</span>b</div><div class="t" style="left:60px;top:297px;font-size:10px;color:#1e88e5;font-weight:bold;letter-spacing:-0.3px">a<span style="font-size:7px">+</span>b</div><svg style="left:60px;top:311px" width="15" height="15" viewBox="0 0 15 15"><path d="M2 1 V13 H14 M2 13 L12 3" fill="none" stroke="#1e88e5" stroke-width="1.4"/><path d="M0 4 L2 0.5 L4 4 M11 11 L14.5 13 L11 15 M9 3 L12.5 2.5 L12 6" fill="none" stroke="#1e88e5" stroke-width="1.3"/></svg><svg style="left:42px;top:327px" width="15" height="15" viewBox="0 0 15 15"><path d="M12 3 Q8 0 5 3 Q2 7 5 11 Q8 14 11 11" fill="none" stroke="#1e88e5" stroke-width="1.4"/><path d="M0 8 h15 M11 5 L14.5 8 L11 11" fill="none" stroke="#1e88e5" stroke-width="1.3"/></svg><svg style="left:43px;top:343px" width="12" height="15" viewBox="0 0 12 15"><path d="M1 1 L11 3 L1 5 L11 7 L1 9 L11 11 L1 13" fill="none" stroke="#d24a5a" stroke-width="1.5"/></svg><svg style="left:40px;top:358px" width="16" height="16" viewBox="0 0 16 16"><circle cx="11" cy="5" r="4.5" fill="#f57c1f"/><circle cx="5" cy="11" r="4.5" fill="#f57c1f"/><path d="M1 1 l2 2 M4 0 v2 M14 11 l2 2 M12 15 v-2" stroke="#f57c1f" stroke-width="1"/></svg><svg style="left:41px;top:375px" width="15" height="15" viewBox="0 0 15 15"><circle cx="7.5" cy="7.5" r="7" fill="#8a3f0a"/><path d="M7.5 3 V8 L10 10" fill="none" stroke="#fff" stroke-width="1.5"/></svg><svg style="left:40px;top:391px" width="16" height="14" viewBox="0 0 16 14"><path d="M1 3 L4 0.5 L12 0.5 L15 3 L8 13 Z" fill="#1ea882"/><path d="M4 4 Q8 2 11 4 Q5 6 9 8" fill="none" stroke="#fff" stroke-width="1.3"/></svg><svg style="left:40px;top:409px" width="16" height="8" viewBox="0 0 16 8"><path d="M3 4 Q0 4 0 7 M13 4 Q16 4 16 7 M4 6 h8" fill="none" stroke="#222" stroke-width="2"/></svg><div class="t" style="left:42px;top:121px">Объект</div><div class="t" style="left:60px;top:137px">Объект</div><div class="t" style="left:79px;top:153px">Кривые</div><div class="t" style="left:79px;top:169px">Переменные</div><div class="t" style="left:79px;top:185px">Атрибуты</div><div class="t" style="left:60px;top:201px">Подсистемы</div><div class="t" style="left:60px;top:217px">Графические объекты</div><div class="t" style="left:60px;top:233px">Тела</div><div class="t" style="left:60px;top:249px">Шарниры</div><div class="t" style="left:60px;top:265px">Биполярные силы</div><div class="t" style="left:79px;top:281px">FictitiousSpring</div><div class="t" style="left:79px;top:297px">FictitiousDamper</div><div class="t" style="left:79px;top:313px">Внешняя сила</div><div class="t" style="left:60px;top:329px">Скалярные моменты</div><div class="t" style="left:60px;top:345px">Линейные силы</div><div class="t" style="left:60px;top:361px">Контактные силы</div><div class="t" style="left:60px;top:377px">Т-силы</div><div class="t" style="left:60px;top:393px">Специальные силы</div><div class="t" style="left:60px;top:409px">Внешние связи</div><div class="a" style="left:0;top:417px;width:279px;height:4px;background:#f0f0f0"></div><div class="a" style="left:0;top:417px;width:279px;height:1px;background:#828790"></div><div class="a" style="left:0px;top:422px;width:265px;height:9px;background-image:radial-gradient(circle,#b4b4b4 0.8px,transparent 1.1px);background-size:5px 4.2px;background-position:0 0"></div><svg style="left:268px;top:423px" width="10" height="10" viewBox="0 0 10 10"><rect x="0.5" y="0.5" width="9" height="9" fill="#f0a8a0" stroke="#704040"/><path d="M1 1 L9 9 M9 1 L1 9" stroke="#fff" stroke-width="2"/><path d="M1 1 L9 9 M9 1 L1 9" stroke="#303050" stroke-width="0.8"/></svg><svg style="left:2px;top:441px" width="20" height="14" viewBox="0 0 20 14"><path d="M1 13 L1 3 L6 3 L8 4.5 L16 4.5 L16 7" fill="#fff" stroke="#000"/><path d="M0.5 13.5 L4 7 L19.5 7 L15.5 13.5 Z" fill="#6a6a6a" stroke="#000"/></svg><svg style="left:35px;top:441px" width="15" height="16" viewBox="0 0 15 16"><path d="M0 0 H15 V16 H0 Z" fill="#000"/><rect x="2" y="2" width="9" height="5" fill="#fff"/><rect x="7.5" y="2" width="2" height="3" fill="#000"/><rect x="2" y="9" width="11" height="5.5" fill="#fff"/></svg><div class="a" style="left:61px;top:436px;width:1px;height:24px;background:#a0a0a0"></div><div class="a" style="left:62px;top:436px;width:1px;height:24px;background:#fff"></div><svg style="left:75px;top:442px" width="14" height="14" viewBox="0 0 14 14"><path d="M7 0 V14 M0 7 H14" stroke="#000" stroke-width="3"/></svg><svg style="left:107px;top:441px" width="13" height="16" viewBox="0 0 13 16"><path d="M1.5 4 L2.5 15 H10.5 L11.5 4" fill="#fff" stroke="#000" stroke-width="1.4"/><ellipse cx="6.5" cy="3" rx="5.8" ry="2" fill="#888" stroke="#000" stroke-width="1.2"/><rect x="5" y="0" width="3" height="1.5" fill="#333"/><path d="M4.5 6 V13.5 M6.5 6 V13.5 M8.5 6 V13.5" stroke="#777" stroke-width="0.9"/></svg><div class="a" style="left:131px;top:436px;width:1px;height:24px;background:#a0a0a0"></div><div class="a" style="left:132px;top:436px;width:1px;height:24px;background:#fff"></div><svg style="left:139px;top:438px" width="25" height="19" viewBox="0 0 25 19"><rect x="0.5" y="6.5" width="24" height="12" fill="#fff" stroke="#000"/><rect x="0.5" y="4.5" width="9" height="3" fill="#fff" stroke="#000"/><path d="M15.5 0 V9 M11 4.5 H20" stroke="#000" stroke-width="2.5"/></svg><svg style="left:171px;top:440px" width="25" height="17" viewBox="0 0 25 17"><rect x="0.5" y="6.5" width="23" height="10" fill="#f4f4f4" stroke="#c0c0c0"/><rect x="14" y="3.5" width="8" height="3" fill="#e0e0e0" stroke="#d0d0d0"/><path d="M3 2 L7 6 M7 2 L3 6" stroke="#bbb"/></svg><svg style="left:202px;top:440px" width="25" height="17" viewBox="0 0 25 17"><rect x="0.5" y="6.5" width="23" height="10" fill="#f4f4f4" stroke="#c0c0c0"/><rect x="14" y="3.5" width="8" height="3" fill="#e0e0e0" stroke="#d0d0d0"/><path d="M2 6 h9 M12 1 v8 M10 1 h4 M10 9 h4" stroke="#bbb" stroke-width="1.2"/></svg><svg style="left:233px;top:440px" width="25" height="17" viewBox="0 0 25 17"><rect x="0.5" y="6.5" width="23" height="10" fill="#f4f4f4" stroke="#c0c0c0"/><rect x="14" y="3.5" width="8" height="3" fill="#e0e0e0" stroke="#d0d0d0"/><text x="9" y="17" font-size="10" fill="#999" font-family="Liberation Sans">*</text></svg><div class="a" style="left:0;top:467px;width:73px;height:22px;background:#fff;border-right:1px solid #d9d9d9;border-top:1px solid #d9d9d9"></div><div class="t" style="left:4px;top:471px">Весь список</div><div class="a" style="left:0;top:488px;width:277px;height:262px;background:#fff;border-right:1px solid #d9d9d9"></div><div class="a" style="left:1px;top:491px;width:274px;height:262px;border:1px solid #636363;background:#fff"></div><div class="a" style="left:2px;top:512px;width:272px;height:1px;background:#dcdcdc"></div><div class="a" style="left:93px;top:492px;width:1px;height:258px;background:#ececec"></div><div class="a" style="left:192px;top:492px;width:1px;height:258px;background:#ececec"></div><div class="t" style="left:8px;top:496px">Имя</div><div class="t" style="left:99px;top:496px">Выражение</div><div class="t" style="left:198px;top:496px">Значение</div><div class="a" style="left:2px;top:533px;width:272px;height:1px;background:#ececec"></div><div class="t" style="left:8px;top:517px">m</div><div class="t" style="left:99px;top:517px">10</div><div class="t" style="left:198px;top:517px"></div><div class="a" style="left:2px;top:554px;width:272px;height:1px;background:#ececec"></div><div class="t" style="left:8px;top:538px">a</div><div class="t" style="left:99px;top:538px">0</div><div class="t" style="left:198px;top:538px"></div><div class="a" style="left:2px;top:575px;width:272px;height:1px;background:#ececec"></div><div class="t" style="left:8px;top:559px">omega</div><div class="t" style="left:99px;top:559px">10</div><div class="t" style="left:198px;top:559px"></div><div class="a" style="left:2px;top:596px;width:272px;height:1px;background:#ececec"></div><div class="t" style="left:8px;top:580px">c</div><div class="t" style="left:99px;top:580px">250</div><div class="t" style="left:198px;top:580px"></div><div class="a" style="left:2px;top:617px;width:272px;height:1px;background:#ececec"></div><div class="t" style="left:8px;top:601px">Length</div><div class="t" style="left:99px;top:601px">0.4</div><div class="t" style="left:198px;top:601px"></div><div class="a" style="left:2px;top:638px;width:272px;height:1px;background:#ececec"></div><div class="t" style="left:8px;top:622px">mu</div><div class="t" style="left:99px;top:622px">5</div><div class="t" style="left:198px;top:622px"></div><div class="a" style="left:2px;top:659px;width:272px;height:1px;background:#ececec"></div><div class="t" style="left:8px;top:643px">k</div><div class="t" style="left:99px;top:643px">sqrt(c/m)</div><div class="t" style="left:198px;top:643px">5</div><div class="a" style="left:2px;top:680px;width:272px;height:1px;background:#ececec"></div><div class="t" style="left:8px;top:664px">mu_star</div><div class="t" style="left:99px;top:664px">2*sqrt(c*m)</div><div class="t" style="left:198px;top:664px">100</div><div class="a" style="left:2px;top:681px;width:91px;height:20px;background:#99ccf7"></div><div class="a" style="left:2px;top:701px;width:272px;height:1px;background:#ececec"></div><div class="t" style="left:8px;top:685px">fz</div><div class="t" style="left:99px;top:685px">0</div><div class="t" style="left:198px;top:685px"></div><div class="a" style="left:2px;top:722px;width:272px;height:1px;background:#ececec"></div><div class="t" style="left:8px;top:706px">fy</div><div class="t" style="left:99px;top:706px">0</div><div class="t" style="left:198px;top:706px"></div><div class="a" style="left:2px;top:743px;width:272px;height:1px;background:#ececec"></div><div class="t" style="left:8px;top:727px">fx</div><div class="t" style="left:99px;top:727px">0</div><div class="t" style="left:198px;top:727px"></div><div class="a" style="left:2px;top:747px;width:272px;height:3px;background:#f0f0f0"></div><div class="a" style="left:19px;top:747px;width:17px;height:3px;background:#cdcdcd"></div><div class="a" style="left:279px;top:114px;width:1px;height:636px;background:#f0f0f0"></div><div class="a" style="left:277px;top:417px;width:2px;height:333px;background:#f0f0f0"></div><div class="a" style="left:280px;top:114px;width:665px;height:26px;background:linear-gradient(#cfcfcf,#e9e9e9 45%,#f2f2f2);border-bottom:1px solid #a0a0a0"></div><div class="a" style="left:280px;top:113px;width:1px;height:637px;background:#a0a0a0"></div><div class="a" style="left:316px;top:115px;width:1px;height:21px;background:#9a9a9a"></div><div class="a" style="left:418px;top:115px;width:1px;height:21px;background:#9a9a9a"></div><div class="a" style="left:553px;top:115px;width:1px;height:21px;background:#9a9a9a"></div><div class="a" style="left:489px;top:113px;width:31px;height:23px;background:linear-gradient(#a9cbec,#c4dcf2);border:1px solid #7eb4ea"></div><svg style="left:288px;top:115px" width="22" height="19" viewBox="0 0 22 19"><rect x="0.5" y="1.5" width="18" height="11" rx="2" fill="#8c8c8c" stroke="#000" stroke-width="1.3"/><circle cx="9" cy="7" r="3.6" fill="#555" stroke="#000"/><circle cx="8" cy="6" r="1" fill="#ccc"/><path d="M2 4.5 h2 M2 6.5 h2 M2 8.5 h2" stroke="#000"/><rect x="4" y="0" width="3" height="1" fill="#000"/><path d="M14 15 h7 l-3.5 3.5 z" fill="#000"/></svg><svg style="left:327px;top:114px" width="22" height="18" viewBox="0 0 22 18"><path d="M0.5 0 V8.5 H5" fill="none" stroke="#000" stroke-dasharray="1 1"/><circle cx="9" cy="8.5" r="5" fill="#a8a8a8" stroke="#000" stroke-width="1.2"/><path d="M12.5 12 L17.5 17" stroke="#000" stroke-width="2"/></svg><svg style="left:359px;top:114px" width="22" height="18" viewBox="0 0 22 18"><path d="M0.5 3 V0.5 M0.5 14 V17.5 H4 M18 17.5 H21.5 V14 M21.5 3 V0.5" fill="none" stroke="#000" stroke-width="1.2"/><circle cx="9" cy="7" r="5" fill="#a8a8a8" stroke="#000" stroke-width="1.2"/><path d="M12.5 10.5 L18 16" stroke="#000" stroke-width="2"/></svg><svg style="left:392px;top:114px" width="18" height="17" viewBox="0 0 18 17"><circle cx="8" cy="7" r="4.5" fill="#8a8a8a" stroke="#000" stroke-width="1.2"/><path d="M8 0 V14 M0 7 H16" stroke="#000" stroke-width="0.9"/><path d="M11 10 L17 16" stroke="#000" stroke-width="2"/></svg><svg style="left:434px;top:113px" width="16" height="18" viewBox="0 0 16 18"><path d="M4 16 Q1 12 0.5 8 L2 7.5 L4.5 10 L4 2 L6 1.5 L7 7 L7.5 0.5 L9.5 0.5 L10 7 L11 1 L13 1.5 L12.5 8 L14 3 L15.5 3.5 L14.5 12 Q13 16 11 17 Z" fill="#fff" stroke="#000" stroke-width="0.8"/></svg><svg style="left:461px;top:113px" width="24" height="21" viewBox="0 0 24 21"><path d="M0.5 10 L11.5 0.5 L23.5 10 L11.5 20.5 Z" fill="#fff" stroke="#000"/><path d="M5 10 L11.5 4.5 L18 10 L11.5 15.5 Z" fill="#e8e8e8" stroke="#000" stroke-width="0.6"/><path d="M11.5 2 V15 M7.5 10 L11.5 15 L15.5 10" fill="none" stroke="#000" stroke-width="1.6"/></svg><svg style="left:494px;top:114px" width="22" height="19" viewBox="0 0 22 19"><path d="M10.5 0 V18" stroke="#000"/><path d="M7 12 Q1 10.5 1.5 7 Q3 3 10.5 3 Q19 3 20 7 Q20.5 10.5 14 12" fill="none" stroke="#000" stroke-width="1.6"/><path d="M5 9 L9 12 L5 15 Z M16 9 L12 12 L16 15 Z" fill="#fff" stroke="#000" stroke-width="0.9"/></svg><svg style="left:525px;top:118px" width="20" height="9" viewBox="0 0 20 9"><rect x="0" y="0" width="8" height="9" fill="#555"/><rect x="11.5" y="0.5" width="8" height="8" fill="#fff" stroke="#555"/><path d="M4 4.5 H16 M13.5 2 L16.5 4.5 L13.5 7" fill="none" stroke="#000" stroke-width="1.2"/></svg><div class="a" style="left:281px;top:140px;width:664px;height:610px;background:#fff;overflow:hidden"><svg style="left:0;top:0" width="664" height="610"><defs><linearGradient id="gb" x1="0" x2="1"><stop offset="0" stop-color="#1010a0"/><stop offset="0.45" stop-color="#4040ff"/><stop offset="0.6" stop-color="#6060ff"/><stop offset="1" stop-color="#0808a8"/></linearGradient><linearGradient id="gr" x1="0" x2="1"><stop offset="0" stop-color="#a00000"/><stop offset="0.5" stop-color="#ff3030"/><stop offset="0.62" stop-color="#ff4040"/><stop offset="1" stop-color="#a00000"/></linearGradient></defs><g stroke="#4e4a14" stroke-width="1" shape-rendering="crispEdges"><line x1="-512.4" y1="104.2" x2="1139.5" y2="150.6"/><line x1="-607.8" y1="116.2" x2="1209.1" y2="173.2"/><line x1="-721.6" y1="130.6" x2="1298.3" y2="202.0"/><line x1="-859.8" y1="148.0" x2="1416.5" y2="240.3"/><line x1="-1030.8" y1="169.5" x2="1580.8" y2="293.5"/><line x1="-1248.3" y1="197.0" x2="1824.6" y2="372.4"/><line x1="-1534.0" y1="233.0" x2="2224.1" y2="501.7"/><line x1="-1925.9" y1="282.4" x2="2998.3" y2="752.3"/><line x1="32.3" y1="119.5" x2="-2309.7" y2="778.3"/><line x1="135.7" y1="122.4" x2="-1978.4" y2="871.8"/><line x1="243.3" y1="125.4" x2="-1560.0" y2="989.8"/><line x1="355.4" y1="128.6" x2="-1015.0" y2="1143.5"/><line x1="472.3" y1="131.9" x2="-276.0" y2="1351.9"/><line x1="594.2" y1="135.3" x2="783.5" y2="1650.7"/></g><line x1="284" y1="441" x2="180" y2="610" stroke="#ff0000" stroke-width="2.2"/><line x1="329.5" y1="1" x2="329.5" y2="72" stroke="#0000ff" stroke-width="2.5"/><polygon points="257.7,325.5 285.6,292.0 395.5,298.7 377.0,331.5" fill="#520000"/><polygon points="377.0,331.5 395.5,298.7 393.5,411.3 376.5,446.5" fill="#2c0000"/><polygon points="257.7,325.5 377.0,331.5 376.5,446.5 259.5,437.5" fill="#ff0000"/><line x1="385" y1="370.5" x2="665" y2="389.5" stroke="#08f008" stroke-width="2.7"/><path d="M294.2 84.9 L293.2 84.9 L292.3 84.9 L291.4 84.9 L290.6 84.9 L289.9 84.9 L289.2 84.9 L288.6 84.8 L288.0 84.8 L287.5 84.8 L287.1 84.8 L286.8 84.7 L286.5 84.7 L286.3 84.6 L286.1 84.6 L286.0 84.5 L286.0 84.5 L286.1 84.4 L286.2 84.4 L286.4 84.3 L286.6 84.3 L287.0 84.3 L287.4 84.2 L287.8 84.2 L288.4 84.2 L288.9 84.1 L289.6 84.1 L290.3 84.1 L291.1 84.1 L292.0 84.1 L292.9 84.1 L293.8 84.1 L294.8 84.1 L295.9 84.2 L297.0 84.2 L298.2 84.2 L299.4 84.3 L300.7 84.4 L302.0 84.5 L303.4 84.5 L304.8 84.6 L306.2 84.8 L307.7 84.9 L309.2 85.0 L310.8 85.2 L312.3 85.3 L313.9 85.5 L315.6 85.7 L317.2 85.9 L318.9 86.1 L320.6 86.3 L322.3 86.6 L324.0 86.8 L325.7 87.1 L327.4 87.4 L329.1 87.7 L330.8 88.0 L332.5 88.3 L334.3 88.7 L336.0 89.0 L337.7 89.4 L339.3 89.8 L341.0 90.2 L342.6 90.6 L344.3 91.0 L345.9 91.5 L347.4 91.9 L349.0 92.4 L350.5 92.8 L351.9 93.3 L353.4 93.8 L354.8 94.3 L356.1 94.9 L357.5 95.4 L358.7 95.9 L359.9 96.5 L361.1 97.0 L362.2 97.6 L363.3 98.2 L364.3 98.8 L365.3 99.4 L366.2 100.0 L367.0 100.6 L367.8 101.2 L368.5 101.9 L369.1 102.5 L369.7 103.1 L370.2 103.8 L370.7 104.4 L371.1 105.1 L371.4 105.7 L371.7 106.4 L371.8 107.0 L372.0 107.7 L372.0 108.3 L372.0 109.0 L371.9 109.6 L371.7 110.3 L371.5 111.0 L371.2 111.6 L370.8 112.3 L370.4 112.9 L369.9 113.5 L369.3 114.2 L368.7 114.8 L368.0 115.4 L367.3 116.1 L366.5 116.7 L365.6 117.3 L364.7 117.9 L363.7 118.5 L362.6 119.1 L361.5 119.6 L360.4 120.2 L359.2 120.8 L357.9 121.3 L356.6 121.9 L355.3 122.4 L353.9 122.9 L352.5 123.4 L351.0 123.9 L349.5 124.4 L348.0 124.8 L346.4 125.3 L344.8 125.7 L343.2 126.2 L341.6 126.6 L339.9 127.0 L338.3 127.4 L336.6 127.7 L334.9 128.1 L333.2 128.4 L331.4 128.8 L329.7 129.1 L328.0 129.4 L326.3 129.7 L324.6 130.0 L322.9 130.2 L321.2 130.5 L319.5 130.7 L317.8 130.9 L316.2 131.1 L314.5 131.3 L312.9 131.5 L311.3 131.7 L309.8 131.8 L308.2 132.0 L306.8 132.1 L305.3 132.2 L303.9 132.3 L302.5 132.4 L301.2 132.5 L299.9 132.6 L298.6 132.6 L297.4 132.7 L296.3 132.7 L295.2 132.8 L294.2 132.8 L293.2 132.8 L292.3 132.8 L291.4 132.8 L290.6 132.8 L289.9 132.8 L289.2 132.8 L288.6 132.7 L288.0 132.7 L287.5 132.7 L287.1 132.6 L286.7 132.6 L286.5 132.6 L286.2 132.5 L286.1 132.5 L286.0 132.4 L286.0 132.4 L286.1 132.3 L286.2 132.3 L286.4 132.2 L286.6 132.2 L287.0 132.2 L287.4 132.1 L287.8 132.1 L288.4 132.1 L289.0 132.0 L289.6 132.0 L290.4 132.0 L291.1 132.0 L292.0 132.0 L292.9 132.0 L293.9 132.0 L294.9 132.0 L295.9 132.1 L297.1 132.1 L298.3 132.1 L299.5 132.2 L300.8 132.3 L302.1 132.4 L303.4 132.4 L304.8 132.5 L306.3 132.7 L307.8 132.8 L309.3 132.9 L310.8 133.1 L312.4 133.2 L314.0 133.4 L315.6 133.6 L317.3 133.8 L318.9 134.0 L320.6 134.2 L322.3 134.5 L324.0 134.7 L325.7 135.0 L327.4 135.3 L329.2 135.6 L330.9 135.9 L332.6 136.2 L334.3 136.6 L336.0 136.9 L337.7 137.3 L339.4 137.7 L341.1 138.1 L342.7 138.5 L344.3 138.9 L345.9 139.4 L347.5 139.8 L349.0 140.3 L350.5 140.8 L352.0 141.2 L353.4 141.7 L354.8 142.3 L356.2 142.8 L357.5 143.3 L358.8 143.9 L360.0 144.4 L361.2 145.0 L362.3 145.5 L363.3 146.1 L364.3 146.7 L365.3 147.3 L366.2 147.9 L367.0 148.5 L367.8 149.2 L368.5 149.8 L369.2 150.4 L369.7 151.0 L370.3 151.7 L370.7 152.3 L371.1 153.0 L371.4 153.6 L371.7 154.3 L371.8 154.9 L372.0 155.6 L372.0 156.3 L372.0 156.9 L371.9 157.6 L371.7 158.2 L371.5 158.9 L371.2 159.5 L370.8 160.2 L370.4 160.8 L369.9 161.5 L369.3 162.1 L368.7 162.7 L368.0 163.4 L367.2 164.0 L366.4 164.6 L365.6 165.2 L364.6 165.8 L363.6 166.4 L362.6 167.0 L361.5 167.6 L360.3 168.1 L359.1 168.7 L357.9 169.2 L356.6 169.8 L355.2 170.3 L353.8 170.8 L352.4 171.3 L350.9 171.8 L349.5 172.3 L347.9 172.8 L346.4 173.2 L344.8 173.6 L343.2 174.1 L341.5 174.5 L339.9 174.9 L338.2 175.3 L336.5 175.7 L334.8 176.0 L333.1 176.4 L331.4 176.7 L329.7 177.0 L327.9 177.3 L326.2 177.6 L324.5 177.9 L322.8 178.1 L321.1 178.4 L319.4 178.6 L317.7 178.8 L316.1 179.0 L314.5 179.2 L312.9 179.4 L311.3 179.6 L309.7 179.7 L308.2 179.9 L306.7 180.0 L305.3 180.1 L303.8 180.2 L302.5 180.3 L301.1 180.4 L299.8 180.5 L298.6 180.5 L297.4 180.6 L296.3 180.6 L295.2 180.7 L294.1 180.7 L293.2 180.7 L292.2 180.7 L291.4 180.7 L290.6 180.7 L289.8 180.7 L289.2 180.7 L288.5 180.6 L288.0 180.6 L287.5 180.6 L287.1 180.5 L286.7 180.5 L286.5 180.5 L286.2 180.4 L286.1 180.4 L286.0 180.3 L286.0 180.3 L286.1 180.2 L286.2 180.2 L286.4 180.1 L286.7 180.1 L287.0 180.1 L287.4 180.0 L287.9 180.0 L288.4 180.0 L289.0 179.9 L289.7 179.9 L290.4 179.9 L291.2 179.9 L292.0 179.9 L292.9 179.9 L293.9 179.9 L294.9 179.9 L296.0 180.0 L297.1 180.0 L298.3 180.1 L299.5 180.1 L300.8 180.2 L302.1 180.3 L303.5 180.3 L304.9 180.5 L306.3 180.6 L307.8 180.7 L309.3 180.8 L310.9 181.0 L312.5 181.1 L314.1 181.3 L315.7 181.5 L317.3 181.7 L319.0 181.9 L320.7 182.2 L322.4 182.4 L324.1 182.7 L325.8 182.9 L327.5 183.2 L329.2 183.5 L331.0 183.8 L332.7 184.2 L334.4 184.5 L336.1 184.9 L337.8 185.2 L339.5 185.6 L341.1 186.0 L342.8 186.4 L344.4 186.8 L346.0 187.3 L347.5 187.7 L349.1 188.2 L350.6 188.7 L352.1 189.2 L353.5 189.7 L354.9 190.2 L356.2 190.7 L357.5 191.2 L358.8 191.8 L360.0 192.3 L361.2 192.9 L362.3 193.5 L363.4 194.0 L364.4 194.6 L365.3 195.2 L366.2 195.8 L367.0 196.5 L367.8 197.1 L368.5 197.7 L369.2 198.3 L369.8 199.0 L370.3 199.6 L370.7 200.3 L371.1 200.9 L371.4 201.6 L371.7 202.2 L371.8 202.9 L372.0 203.5 L372.0 204.2 L372.0 204.8 L371.9 205.5 L371.7 206.2 L371.5 206.8 L371.2 207.5 L370.8 208.1 L370.4 208.8 L369.9 209.4 L369.3 210.0 L368.7 210.7 L368.0 211.3 L367.2 211.9 L366.4 212.5 L365.5 213.1 L364.6 213.7 L363.6 214.3 L362.5 214.9 L361.4 215.5 L360.3 216.1 L359.1 216.6 L357.8 217.2 L356.5 217.7 L355.2 218.2 L353.8 218.7 L352.4 219.2 L350.9 219.7 L349.4 220.2 L347.9 220.7 L346.3 221.1 L344.7 221.6 L343.1 222.0 L341.5 222.4 L339.8 222.8 L338.1 223.2 L336.4 223.6 L334.7 223.9 L333.0 224.3 L331.3 224.6 L329.6 224.9 L327.9 225.2 L326.2 225.5 L324.4 225.8 L322.7 226.0 L321.0 226.3 L319.4 226.5 L317.7 226.7 L316.0 227.0 L314.4 227.1 L312.8 227.3 L311.2 227.5 L309.7 227.6 L308.1 227.8 L306.7 227.9 L305.2 228.0 L303.8 228.1 L302.4 228.2 L301.1 228.3 L299.8 228.4 L298.6 228.4 L297.4 228.5 L296.2 228.5 L295.1 228.6 L294.1 228.6 L293.1 228.6 L292.2 228.6 L291.3 228.6 L290.5 228.6 L289.8 228.6 L289.1 228.6 L288.5 228.5 L288.0 228.5 L287.5 228.5 L287.1 228.4 L286.7 228.4 L286.4 228.4 L286.2 228.3 L286.1 228.3 L286.0 228.2 L286.0 228.2 L286.1 228.1 L286.2 228.1 L286.4 228.0 L286.7 228.0 L287.0 228.0 L287.4 227.9 L287.9 227.9 L288.4 227.9 L289.0 227.8 L289.7 227.8 L290.4 227.8 L291.2 227.8 L292.1 227.8 L293.0 227.8 L293.9 227.8 L295.0 227.8 L296.0 227.9 L297.2 227.9 L298.3 228.0 L299.6 228.0 L300.9 228.1 L302.2 228.2 L303.5 228.3 L304.9 228.4 L306.4 228.5 L307.9 228.6 L309.4 228.7 L310.9 228.9 L312.5 229.0 L314.1 229.2 L315.7 229.4 L317.4 229.6 L319.1 229.8 L320.7 230.1 L322.4 230.3 L324.1 230.6 L325.9 230.8 L327.6 231.1 L329.3 231.4 L331.0 231.7 L332.7 232.1 L334.4 232.4 L336.1 232.8 L337.8 233.1 L339.5 233.5 L341.2 233.9 L342.8 234.3 L344.4 234.8 L346.0 235.2 L347.6 235.6 L349.1 236.1 L350.6 236.6 L352.1 237.1 L353.5 237.6 L354.9 238.1 L356.3 238.6 L357.6 239.1 L358.9 239.7 L360.1 240.2 L361.2 240.8 L362.3 241.4 L363.4 242.0 L364.4 242.6 L365.4 243.2 L366.2 243.8 L367.1 244.4 L367.8 245.0 L368.6 245.6 L369.2 246.3 L369.8 246.9 L370.3 247.5 L370.7 248.2 L371.1 248.8 L371.4 249.5 L371.7 250.1 L371.9 250.8 L372.0 251.4 L372.0 252.1 L372.0 252.8 L371.9 253.4 L371.7 254.1 L371.5 254.7 L371.2 255.4 L370.8 256.0 L370.4 256.7 L369.9 257.3 L369.3 258.0 L368.6 258.6 L367.9 259.2 L367.2 259.8 L366.4 260.5 L365.5 261.1 L364.5 261.7 L363.5 262.3 L362.5 262.8 L361.4 263.4 L360.2 264.0 L359.0 264.5 L357.8 265.1 L356.5 265.6 L355.1 266.1 L353.7 266.7 L352.3 267.2 L350.8 267.6 L349.3 268.1 L347.8 268.6 L346.2 269.0 L344.7 269.5 L343.0 269.9 L341.4 270.3 L339.7 270.7 L338.1 271.1 L336.4 271.5 L334.7 271.8 L333.0 272.2 L331.3 272.5 L329.5 272.8 L327.8 273.1 L326.1 273.4 L324.4 273.7 L322.7 274.0 L321.0 274.2 L319.3 274.4 L317.6 274.7 L316.0 274.9 L314.3 275.0 L312.7 275.2 L311.2 275.4 L309.6 275.5 L308.1 275.7 L306.6 275.8 L305.1 275.9 L303.7 276.0 L302.4 276.1 L301.0 276.2 L299.7 276.3 L298.5 276.3 L297.3 276.4 L296.2 276.4 L295.1 276.5 L294.1 276.5 L293.1 276.5 L292.2 276.5 L291.3 276.5 L290.5 276.5 L289.8 276.5 L289.1 276.5 L288.5 276.4 L287.9 276.4 L287.5 276.4 L287.1 276.3 L286.7 276.3 L286.4 276.3 L286.2 276.2 L286.1 276.2 L286.0 276.1 L286.0 276.1 L286.1 276.0 L286.2 276.0 L286.4 275.9 L286.7 275.9 L287.0 275.9 L287.4 275.8 L287.9 275.8 L288.4 275.8 L289.0 275.7 L289.7 275.7 L290.4 275.7 L291.2 275.7 L292.1 275.7 L293.0 275.7 L294.0 275.7 L295.0 275.7 L296.1 275.8 L297.2 275.8 L298.4 275.9 L299.6 275.9 L300.9 276.0 L302.2 276.1 L303.6 276.2 L305.0 276.3 L306.4 276.4 L307.9 276.5 L309.4 276.6 L311.0 276.8 L312.6 277.0 L314.2 277.1 L315.8 277.3 L317.5 277.5 L319.1 277.7 L320.8 278.0 L322.5 278.2 L324.2 278.5 L325.9 278.8 L327.6 279.0 L329.4 279.3 L331.1 279.7 L332.8 280.0 L334.5 280.3 L336.2 280.7 L337.9 281.1 L339.6 281.4 L341.2 281.8 L342.9 282.3 L344.5 282.7 L346.1 283.1 L347.7 283.6 L349.2 284.0 L350.7 284.5 L352.2 285.0 L353.6 285.5 L355.0 286.0 L356.3 286.5 L357.6 287.1 L358.9 287.6 L360.1 288.2 L361.3 288.7 L362.4 289.3 L363.4 289.9 L364.4 290.5 L365.4 291.1 L366.3 291.7 L367.1 292.3 L367.9 292.9 L368.6 293.5 L369.2 294.2 L369.8 294.8 L370.3 295.5 L370.8 296.1 L371.1 296.8 L371.4 297.4 L371.7 298.1 L371.9 298.7 L372.0 299.4 L372.0 300.0 L372.0 300.7 L371.9 301.3 L371.7 302.0 L371.5 302.7 L371.2 303.3 L370.8 304.0 L370.3 304.6 L369.8 305.2 L369.3 305.9 L368.6 306.5 L367.9 307.1 L367.2 307.8 L366.3 308.4 L365.5 309.0 L364.5 309.6 L363.5 310.2 L362.5 310.8 L361.4 311.3 L360.2 311.9 L359.0 312.5 L357.7 313.0 L356.4 313.5 L355.1 314.1 L353.7 314.6 L352.3 315.1 L350.8 315.6 L349.3 316.0 L347.8 316.5 L346.2 317.0 L344.6 317.4 L343.0 317.8 L341.3 318.2 L339.7 318.6 L338.0 319.0 L336.3 319.4 L334.6 319.8 L332.9 320.1 L331.2 320.4 L329.5 320.7 L327.8 321.0 L326.0 321.3 L324.3 321.6 L322.6 321.9 L320.9 322.1 L319.2 322.3" stroke-linejoin="round" fill="none" stroke="#3a3200" stroke-width="12.5"/><path d="M294.2 84.9 L293.2 84.9 L292.3 84.9 L291.4 84.9 L290.6 84.9 L289.9 84.9 L289.2 84.9 L288.6 84.8 L288.0 84.8 L287.5 84.8 L287.1 84.8 L286.8 84.7 L286.5 84.7 L286.3 84.6 L286.1 84.6 L286.0 84.5 L286.0 84.5 L286.1 84.4 L286.2 84.4 L286.4 84.3 L286.6 84.3 L287.0 84.3 L287.4 84.2 L287.8 84.2 L288.4 84.2 L288.9 84.1 L289.6 84.1 L290.3 84.1 L291.1 84.1 L292.0 84.1 L292.9 84.1 L293.8 84.1 L294.8 84.1 L295.9 84.2 L297.0 84.2 L298.2 84.2 L299.4 84.3 L300.7 84.4 L302.0 84.5 L303.4 84.5 L304.8 84.6 L306.2 84.8 L307.7 84.9 L309.2 85.0 L310.8 85.2 L312.3 85.3 L313.9 85.5 L315.6 85.7 L317.2 85.9 L318.9 86.1 L320.6 86.3 L322.3 86.6 L324.0 86.8 L325.7 87.1 L327.4 87.4 L329.1 87.7 L330.8 88.0 L332.5 88.3 L334.3 88.7 L336.0 89.0 L337.7 89.4 L339.3 89.8 L341.0 90.2 L342.6 90.6 L344.3 91.0 L345.9 91.5 L347.4 91.9 L349.0 92.4 L350.5 92.8 L351.9 93.3 L353.4 93.8 L354.8 94.3 L356.1 94.9 L357.5 95.4 L358.7 95.9 L359.9 96.5 L361.1 97.0 L362.2 97.6 L363.3 98.2 L364.3 98.8 L365.3 99.4 L366.2 100.0 L367.0 100.6 L367.8 101.2 L368.5 101.9 L369.1 102.5 L369.7 103.1 L370.2 103.8 L370.7 104.4 L371.1 105.1 L371.4 105.7 L371.7 106.4 L371.8 107.0 L372.0 107.7 L372.0 108.3 L372.0 109.0 L371.9 109.6 L371.7 110.3 L371.5 111.0 L371.2 111.6 L370.8 112.3 L370.4 112.9 L369.9 113.5 L369.3 114.2 L368.7 114.8 L368.0 115.4 L367.3 116.1 L366.5 116.7 L365.6 117.3 L364.7 117.9 L363.7 118.5 L362.6 119.1 L361.5 119.6 L360.4 120.2 L359.2 120.8 L357.9 121.3 L356.6 121.9 L355.3 122.4 L353.9 122.9 L352.5 123.4 L351.0 123.9 L349.5 124.4 L348.0 124.8 L346.4 125.3 L344.8 125.7 L343.2 126.2 L341.6 126.6 L339.9 127.0 L338.3 127.4 L336.6 127.7 L334.9 128.1 L333.2 128.4 L331.4 128.8 L329.7 129.1 L328.0 129.4 L326.3 129.7 L324.6 130.0 L322.9 130.2 L321.2 130.5 L319.5 130.7 L317.8 130.9 L316.2 131.1 L314.5 131.3 L312.9 131.5 L311.3 131.7 L309.8 131.8 L308.2 132.0 L306.8 132.1 L305.3 132.2 L303.9 132.3 L302.5 132.4 L301.2 132.5 L299.9 132.6 L298.6 132.6 L297.4 132.7 L296.3 132.7 L295.2 132.8 L294.2 132.8 L293.2 132.8 L292.3 132.8 L291.4 132.8 L290.6 132.8 L289.9 132.8 L289.2 132.8 L288.6 132.7 L288.0 132.7 L287.5 132.7 L287.1 132.6 L286.7 132.6 L286.5 132.6 L286.2 132.5 L286.1 132.5 L286.0 132.4 L286.0 132.4 L286.1 132.3 L286.2 132.3 L286.4 132.2 L286.6 132.2 L287.0 132.2 L287.4 132.1 L287.8 132.1 L288.4 132.1 L289.0 132.0 L289.6 132.0 L290.4 132.0 L291.1 132.0 L292.0 132.0 L292.9 132.0 L293.9 132.0 L294.9 132.0 L295.9 132.1 L297.1 132.1 L298.3 132.1 L299.5 132.2 L300.8 132.3 L302.1 132.4 L303.4 132.4 L304.8 132.5 L306.3 132.7 L307.8 132.8 L309.3 132.9 L310.8 133.1 L312.4 133.2 L314.0 133.4 L315.6 133.6 L317.3 133.8 L318.9 134.0 L320.6 134.2 L322.3 134.5 L324.0 134.7 L325.7 135.0 L327.4 135.3 L329.2 135.6 L330.9 135.9 L332.6 136.2 L334.3 136.6 L336.0 136.9 L337.7 137.3 L339.4 137.7 L341.1 138.1 L342.7 138.5 L344.3 138.9 L345.9 139.4 L347.5 139.8 L349.0 140.3 L350.5 140.8 L352.0 141.2 L353.4 141.7 L354.8 142.3 L356.2 142.8 L357.5 143.3 L358.8 143.9 L360.0 144.4 L361.2 145.0 L362.3 145.5 L363.3 146.1 L364.3 146.7 L365.3 147.3 L366.2 147.9 L367.0 148.5 L367.8 149.2 L368.5 149.8 L369.2 150.4 L369.7 151.0 L370.3 151.7 L370.7 152.3 L371.1 153.0 L371.4 153.6 L371.7 154.3 L371.8 154.9 L372.0 155.6 L372.0 156.3 L372.0 156.9 L371.9 157.6 L371.7 158.2 L371.5 158.9 L371.2 159.5 L370.8 160.2 L370.4 160.8 L369.9 161.5 L369.3 162.1 L368.7 162.7 L368.0 163.4 L367.2 164.0 L366.4 164.6 L365.6 165.2 L364.6 165.8 L363.6 166.4 L362.6 167.0 L361.5 167.6 L360.3 168.1 L359.1 168.7 L357.9 169.2 L356.6 169.8 L355.2 170.3 L353.8 170.8 L352.4 171.3 L350.9 171.8 L349.5 172.3 L347.9 172.8 L346.4 173.2 L344.8 173.6 L343.2 174.1 L341.5 174.5 L339.9 174.9 L338.2 175.3 L336.5 175.7 L334.8 176.0 L333.1 176.4 L331.4 176.7 L329.7 177.0 L327.9 177.3 L326.2 177.6 L324.5 177.9 L322.8 178.1 L321.1 178.4 L319.4 178.6 L317.7 178.8 L316.1 179.0 L314.5 179.2 L312.9 179.4 L311.3 179.6 L309.7 179.7 L308.2 179.9 L306.7 180.0 L305.3 180.1 L303.8 180.2 L302.5 180.3 L301.1 180.4 L299.8 180.5 L298.6 180.5 L297.4 180.6 L296.3 180.6 L295.2 180.7 L294.1 180.7 L293.2 180.7 L292.2 180.7 L291.4 180.7 L290.6 180.7 L289.8 180.7 L289.2 180.7 L288.5 180.6 L288.0 180.6 L287.5 180.6 L287.1 180.5 L286.7 180.5 L286.5 180.5 L286.2 180.4 L286.1 180.4 L286.0 180.3 L286.0 180.3 L286.1 180.2 L286.2 180.2 L286.4 180.1 L286.7 180.1 L287.0 180.1 L287.4 180.0 L287.9 180.0 L288.4 180.0 L289.0 179.9 L289.7 179.9 L290.4 179.9 L291.2 179.9 L292.0 179.9 L292.9 179.9 L293.9 179.9 L294.9 179.9 L296.0 180.0 L297.1 180.0 L298.3 180.1 L299.5 180.1 L300.8 180.2 L302.1 180.3 L303.5 180.3 L304.9 180.5 L306.3 180.6 L307.8 180.7 L309.3 180.8 L310.9 181.0 L312.5 181.1 L314.1 181.3 L315.7 181.5 L317.3 181.7 L319.0 181.9 L320.7 182.2 L322.4 182.4 L324.1 182.7 L325.8 182.9 L327.5 183.2 L329.2 183.5 L331.0 183.8 L332.7 184.2 L334.4 184.5 L336.1 184.9 L337.8 185.2 L339.5 185.6 L341.1 186.0 L342.8 186.4 L344.4 186.8 L346.0 187.3 L347.5 187.7 L349.1 188.2 L350.6 188.7 L352.1 189.2 L353.5 189.7 L354.9 190.2 L356.2 190.7 L357.5 191.2 L358.8 191.8 L360.0 192.3 L361.2 192.9 L362.3 193.5 L363.4 194.0 L364.4 194.6 L365.3 195.2 L366.2 195.8 L367.0 196.5 L367.8 197.1 L368.5 197.7 L369.2 198.3 L369.8 199.0 L370.3 199.6 L370.7 200.3 L371.1 200.9 L371.4 201.6 L371.7 202.2 L371.8 202.9 L372.0 203.5 L372.0 204.2 L372.0 204.8 L371.9 205.5 L371.7 206.2 L371.5 206.8 L371.2 207.5 L370.8 208.1 L370.4 208.8 L369.9 209.4 L369.3 210.0 L368.7 210.7 L368.0 211.3 L367.2 211.9 L366.4 212.5 L365.5 213.1 L364.6 213.7 L363.6 214.3 L362.5 214.9 L361.4 215.5 L360.3 216.1 L359.1 216.6 L357.8 217.2 L356.5 217.7 L355.2 218.2 L353.8 218.7 L352.4 219.2 L350.9 219.7 L349.4 220.2 L347.9 220.7 L346.3 221.1 L344.7 221.6 L343.1 222.0 L341.5 222.4 L339.8 222.8 L338.1 223.2 L336.4 223.6 L334.7 223.9 L333.0 224.3 L331.3 224.6 L329.6 224.9 L327.9 225.2 L326.2 225.5 L324.4 225.8 L322.7 226.0 L321.0 226.3 L319.4 226.5 L317.7 226.7 L316.0 227.0 L314.4 227.1 L312.8 227.3 L311.2 227.5 L309.7 227.6 L308.1 227.8 L306.7 227.9 L305.2 228.0 L303.8 228.1 L302.4 228.2 L301.1 228.3 L299.8 228.4 L298.6 228.4 L297.4 228.5 L296.2 228.5 L295.1 228.6 L294.1 228.6 L293.1 228.6 L292.2 228.6 L291.3 228.6 L290.5 228.6 L289.8 228.6 L289.1 228.6 L288.5 228.5 L288.0 228.5 L287.5 228.5 L287.1 228.4 L286.7 228.4 L286.4 228.4 L286.2 228.3 L286.1 228.3 L286.0 228.2 L286.0 228.2 L286.1 228.1 L286.2 228.1 L286.4 228.0 L286.7 228.0 L287.0 228.0 L287.4 227.9 L287.9 227.9 L288.4 227.9 L289.0 227.8 L289.7 227.8 L290.4 227.8 L291.2 227.8 L292.1 227.8 L293.0 227.8 L293.9 227.8 L295.0 227.8 L296.0 227.9 L297.2 227.9 L298.3 228.0 L299.6 228.0 L300.9 228.1 L302.2 228.2 L303.5 228.3 L304.9 228.4 L306.4 228.5 L307.9 228.6 L309.4 228.7 L310.9 228.9 L312.5 229.0 L314.1 229.2 L315.7 229.4 L317.4 229.6 L319.1 229.8 L320.7 230.1 L322.4 230.3 L324.1 230.6 L325.9 230.8 L327.6 231.1 L329.3 231.4 L331.0 231.7 L332.7 232.1 L334.4 232.4 L336.1 232.8 L337.8 233.1 L339.5 233.5 L341.2 233.9 L342.8 234.3 L344.4 234.8 L346.0 235.2 L347.6 235.6 L349.1 236.1 L350.6 236.6 L352.1 237.1 L353.5 237.6 L354.9 238.1 L356.3 238.6 L357.6 239.1 L358.9 239.7 L360.1 240.2 L361.2 240.8 L362.3 241.4 L363.4 242.0 L364.4 242.6 L365.4 243.2 L366.2 243.8 L367.1 244.4 L367.8 245.0 L368.6 245.6 L369.2 246.3 L369.8 246.9 L370.3 247.5 L370.7 248.2 L371.1 248.8 L371.4 249.5 L371.7 250.1 L371.9 250.8 L372.0 251.4 L372.0 252.1 L372.0 252.8 L371.9 253.4 L371.7 254.1 L371.5 254.7 L371.2 255.4 L370.8 256.0 L370.4 256.7 L369.9 257.3 L369.3 258.0 L368.6 258.6 L367.9 259.2 L367.2 259.8 L366.4 260.5 L365.5 261.1 L364.5 261.7 L363.5 262.3 L362.5 262.8 L361.4 263.4 L360.2 264.0 L359.0 264.5 L357.8 265.1 L356.5 265.6 L355.1 266.1 L353.7 266.7 L352.3 267.2 L350.8 267.6 L349.3 268.1 L347.8 268.6 L346.2 269.0 L344.7 269.5 L343.0 269.9 L341.4 270.3 L339.7 270.7 L338.1 271.1 L336.4 271.5 L334.7 271.8 L333.0 272.2 L331.3 272.5 L329.5 272.8 L327.8 273.1 L326.1 273.4 L324.4 273.7 L322.7 274.0 L321.0 274.2 L319.3 274.4 L317.6 274.7 L316.0 274.9 L314.3 275.0 L312.7 275.2 L311.2 275.4 L309.6 275.5 L308.1 275.7 L306.6 275.8 L305.1 275.9 L303.7 276.0 L302.4 276.1 L301.0 276.2 L299.7 276.3 L298.5 276.3 L297.3 276.4 L296.2 276.4 L295.1 276.5 L294.1 276.5 L293.1 276.5 L292.2 276.5 L291.3 276.5 L290.5 276.5 L289.8 276.5 L289.1 276.5 L288.5 276.4 L287.9 276.4 L287.5 276.4 L287.1 276.3 L286.7 276.3 L286.4 276.3 L286.2 276.2 L286.1 276.2 L286.0 276.1 L286.0 276.1 L286.1 276.0 L286.2 276.0 L286.4 275.9 L286.7 275.9 L287.0 275.9 L287.4 275.8 L287.9 275.8 L288.4 275.8 L289.0 275.7 L289.7 275.7 L290.4 275.7 L291.2 275.7 L292.1 275.7 L293.0 275.7 L294.0 275.7 L295.0 275.7 L296.1 275.8 L297.2 275.8 L298.4 275.9 L299.6 275.9 L300.9 276.0 L302.2 276.1 L303.6 276.2 L305.0 276.3 L306.4 276.4 L307.9 276.5 L309.4 276.6 L311.0 276.8 L312.6 277.0 L314.2 277.1 L315.8 277.3 L317.5 277.5 L319.1 277.7 L320.8 278.0 L322.5 278.2 L324.2 278.5 L325.9 278.8 L327.6 279.0 L329.4 279.3 L331.1 279.7 L332.8 280.0 L334.5 280.3 L336.2 280.7 L337.9 281.1 L339.6 281.4 L341.2 281.8 L342.9 282.3 L344.5 282.7 L346.1 283.1 L347.7 283.6 L349.2 284.0 L350.7 284.5 L352.2 285.0 L353.6 285.5 L355.0 286.0 L356.3 286.5 L357.6 287.1 L358.9 287.6 L360.1 288.2 L361.3 288.7 L362.4 289.3 L363.4 289.9 L364.4 290.5 L365.4 291.1 L366.3 291.7 L367.1 292.3 L367.9 292.9 L368.6 293.5 L369.2 294.2 L369.8 294.8 L370.3 295.5 L370.8 296.1 L371.1 296.8 L371.4 297.4 L371.7 298.1 L371.9 298.7 L372.0 299.4 L372.0 300.0 L372.0 300.7 L371.9 301.3 L371.7 302.0 L371.5 302.7 L371.2 303.3 L370.8 304.0 L370.3 304.6 L369.8 305.2 L369.3 305.9 L368.6 306.5 L367.9 307.1 L367.2 307.8 L366.3 308.4 L365.5 309.0 L364.5 309.6 L363.5 310.2 L362.5 310.8 L361.4 311.3 L360.2 311.9 L359.0 312.5 L357.7 313.0 L356.4 313.5 L355.1 314.1 L353.7 314.6 L352.3 315.1 L350.8 315.6 L349.3 316.0 L347.8 316.5 L346.2 317.0 L344.6 317.4 L343.0 317.8 L341.3 318.2 L339.7 318.6 L338.0 319.0 L336.3 319.4 L334.6 319.8 L332.9 320.1 L331.2 320.4 L329.5 320.7 L327.8 321.0 L326.0 321.3 L324.3 321.6 L322.6 321.9 L320.9 322.1 L319.2 322.3" stroke-linejoin="round" fill="none" stroke="#8c7c00" stroke-width="10.8"/><path d="M294.2 84.9 L293.2 84.9 L292.3 84.9 L291.4 84.9 L290.6 84.9 L289.9 84.9 L289.2 84.9 L288.6 84.8 L288.0 84.8 L287.5 84.8 L287.1 84.8 L286.8 84.7 L286.5 84.7 L286.3 84.6 L286.1 84.6 L286.0 84.5 L286.0 84.5 L286.1 84.4 L286.2 84.4 L286.4 84.3 L286.6 84.3 L287.0 84.3 L287.4 84.2 L287.8 84.2 L288.4 84.2 L288.9 84.1 L289.6 84.1 L290.3 84.1 L291.1 84.1 L292.0 84.1 L292.9 84.1 L293.8 84.1 L294.8 84.1 L295.9 84.2 L297.0 84.2 L298.2 84.2 L299.4 84.3 L300.7 84.4 L302.0 84.5 L303.4 84.5 L304.8 84.6 L306.2 84.8 L307.7 84.9 L309.2 85.0 L310.8 85.2 L312.3 85.3 L313.9 85.5 L315.6 85.7 L317.2 85.9 L318.9 86.1 L320.6 86.3 L322.3 86.6 L324.0 86.8 L325.7 87.1 L327.4 87.4 L329.1 87.7 L330.8 88.0 L332.5 88.3 L334.3 88.7 L336.0 89.0 L337.7 89.4 L339.3 89.8 L341.0 90.2 L342.6 90.6 L344.3 91.0 L345.9 91.5 L347.4 91.9 L349.0 92.4 L350.5 92.8 L351.9 93.3 L353.4 93.8 L354.8 94.3 L356.1 94.9 L357.5 95.4 L358.7 95.9 L359.9 96.5 L361.1 97.0 L362.2 97.6 L363.3 98.2 L364.3 98.8 L365.3 99.4 L366.2 100.0 L367.0 100.6 L367.8 101.2 L368.5 101.9 L369.1 102.5 L369.7 103.1 L370.2 103.8 L370.7 104.4 L371.1 105.1 L371.4 105.7 L371.7 106.4 L371.8 107.0 L372.0 107.7 L372.0 108.3 L372.0 109.0 L371.9 109.6 L371.7 110.3 L371.5 111.0 L371.2 111.6 L370.8 112.3 L370.4 112.9 L369.9 113.5 L369.3 114.2 L368.7 114.8 L368.0 115.4 L367.3 116.1 L366.5 116.7 L365.6 117.3 L364.7 117.9 L363.7 118.5 L362.6 119.1 L361.5 119.6 L360.4 120.2 L359.2 120.8 L357.9 121.3 L356.6 121.9 L355.3 122.4 L353.9 122.9 L352.5 123.4 L351.0 123.9 L349.5 124.4 L348.0 124.8 L346.4 125.3 L344.8 125.7 L343.2 126.2 L341.6 126.6 L339.9 127.0 L338.3 127.4 L336.6 127.7 L334.9 128.1 L333.2 128.4 L331.4 128.8 L329.7 129.1 L328.0 129.4 L326.3 129.7 L324.6 130.0 L322.9 130.2 L321.2 130.5 L319.5 130.7 L317.8 130.9 L316.2 131.1 L314.5 131.3 L312.9 131.5 L311.3 131.7 L309.8 131.8 L308.2 132.0 L306.8 132.1 L305.3 132.2 L303.9 132.3 L302.5 132.4 L301.2 132.5 L299.9 132.6 L298.6 132.6 L297.4 132.7 L296.3 132.7 L295.2 132.8 L294.2 132.8 L293.2 132.8 L292.3 132.8 L291.4 132.8 L290.6 132.8 L289.9 132.8 L289.2 132.8 L288.6 132.7 L288.0 132.7 L287.5 132.7 L287.1 132.6 L286.7 132.6 L286.5 132.6 L286.2 132.5 L286.1 132.5 L286.0 132.4 L286.0 132.4 L286.1 132.3 L286.2 132.3 L286.4 132.2 L286.6 132.2 L287.0 132.2 L287.4 132.1 L287.8 132.1 L288.4 132.1 L289.0 132.0 L289.6 132.0 L290.4 132.0 L291.1 132.0 L292.0 132.0 L292.9 132.0 L293.9 132.0 L294.9 132.0 L295.9 132.1 L297.1 132.1 L298.3 132.1 L299.5 132.2 L300.8 132.3 L302.1 132.4 L303.4 132.4 L304.8 132.5 L306.3 132.7 L307.8 132.8 L309.3 132.9 L310.8 133.1 L312.4 133.2 L314.0 133.4 L315.6 133.6 L317.3 133.8 L318.9 134.0 L320.6 134.2 L322.3 134.5 L324.0 134.7 L325.7 135.0 L327.4 135.3 L329.2 135.6 L330.9 135.9 L332.6 136.2 L334.3 136.6 L336.0 136.9 L337.7 137.3 L339.4 137.7 L341.1 138.1 L342.7 138.5 L344.3 138.9 L345.9 139.4 L347.5 139.8 L349.0 140.3 L350.5 140.8 L352.0 141.2 L353.4 141.7 L354.8 142.3 L356.2 142.8 L357.5 143.3 L358.8 143.9 L360.0 144.4 L361.2 145.0 L362.3 145.5 L363.3 146.1 L364.3 146.7 L365.3 147.3 L366.2 147.9 L367.0 148.5 L367.8 149.2 L368.5 149.8 L369.2 150.4 L369.7 151.0 L370.3 151.7 L370.7 152.3 L371.1 153.0 L371.4 153.6 L371.7 154.3 L371.8 154.9 L372.0 155.6 L372.0 156.3 L372.0 156.9 L371.9 157.6 L371.7 158.2 L371.5 158.9 L371.2 159.5 L370.8 160.2 L370.4 160.8 L369.9 161.5 L369.3 162.1 L368.7 162.7 L368.0 163.4 L367.2 164.0 L366.4 164.6 L365.6 165.2 L364.6 165.8 L363.6 166.4 L362.6 167.0 L361.5 167.6 L360.3 168.1 L359.1 168.7 L357.9 169.2 L356.6 169.8 L355.2 170.3 L353.8 170.8 L352.4 171.3 L350.9 171.8 L349.5 172.3 L347.9 172.8 L346.4 173.2 L344.8 173.6 L343.2 174.1 L341.5 174.5 L339.9 174.9 L338.2 175.3 L336.5 175.7 L334.8 176.0 L333.1 176.4 L331.4 176.7 L329.7 177.0 L327.9 177.3 L326.2 177.6 L324.5 177.9 L322.8 178.1 L321.1 178.4 L319.4 178.6 L317.7 178.8 L316.1 179.0 L314.5 179.2 L312.9 179.4 L311.3 179.6 L309.7 179.7 L308.2 179.9 L306.7 180.0 L305.3 180.1 L303.8 180.2 L302.5 180.3 L301.1 180.4 L299.8 180.5 L298.6 180.5 L297.4 180.6 L296.3 180.6 L295.2 180.7 L294.1 180.7 L293.2 180.7 L292.2 180.7 L291.4 180.7 L290.6 180.7 L289.8 180.7 L289.2 180.7 L288.5 180.6 L288.0 180.6 L287.5 180.6 L287.1 180.5 L286.7 180.5 L286.5 180.5 L286.2 180.4 L286.1 180.4 L286.0 180.3 L286.0 180.3 L286.1 180.2 L286.2 180.2 L286.4 180.1 L286.7 180.1 L287.0 180.1 L287.4 180.0 L287.9 180.0 L288.4 180.0 L289.0 179.9 L289.7 179.9 L290.4 179.9 L291.2 179.9 L292.0 179.9 L292.9 179.9 L293.9 179.9 L294.9 179.9 L296.0 180.0 L297.1 180.0 L298.3 180.1 L299.5 180.1 L300.8 180.2 L302.1 180.3 L303.5 180.3 L304.9 180.5 L306.3 180.6 L307.8 180.7 L309.3 180.8 L310.9 181.0 L312.5 181.1 L314.1 181.3 L315.7 181.5 L317.3 181.7 L319.0 181.9 L320.7 182.2 L322.4 182.4 L324.1 182.7 L325.8 182.9 L327.5 183.2 L329.2 183.5 L331.0 183.8 L332.7 184.2 L334.4 184.5 L336.1 184.9 L337.8 185.2 L339.5 185.6 L341.1 186.0 L342.8 186.4 L344.4 186.8 L346.0 187.3 L347.5 187.7 L349.1 188.2 L350.6 188.7 L352.1 189.2 L353.5 189.7 L354.9 190.2 L356.2 190.7 L357.5 191.2 L358.8 191.8 L360.0 192.3 L361.2 192.9 L362.3 193.5 L363.4 194.0 L364.4 194.6 L365.3 195.2 L366.2 195.8 L367.0 196.5 L367.8 197.1 L368.5 197.7 L369.2 198.3 L369.8 199.0 L370.3 199.6 L370.7 200.3 L371.1 200.9 L371.4 201.6 L371.7 202.2 L371.8 202.9 L372.0 203.5 L372.0 204.2 L372.0 204.8 L371.9 205.5 L371.7 206.2 L371.5 206.8 L371.2 207.5 L370.8 208.1 L370.4 208.8 L369.9 209.4 L369.3 210.0 L368.7 210.7 L368.0 211.3 L367.2 211.9 L366.4 212.5 L365.5 213.1 L364.6 213.7 L363.6 214.3 L362.5 214.9 L361.4 215.5 L360.3 216.1 L359.1 216.6 L357.8 217.2 L356.5 217.7 L355.2 218.2 L353.8 218.7 L352.4 219.2 L350.9 219.7 L349.4 220.2 L347.9 220.7 L346.3 221.1 L344.7 221.6 L343.1 222.0 L341.5 222.4 L339.8 222.8 L338.1 223.2 L336.4 223.6 L334.7 223.9 L333.0 224.3 L331.3 224.6 L329.6 224.9 L327.9 225.2 L326.2 225.5 L324.4 225.8 L322.7 226.0 L321.0 226.3 L319.4 226.5 L317.7 226.7 L316.0 227.0 L314.4 227.1 L312.8 227.3 L311.2 227.5 L309.7 227.6 L308.1 227.8 L306.7 227.9 L305.2 228.0 L303.8 228.1 L302.4 228.2 L301.1 228.3 L299.8 228.4 L298.6 228.4 L297.4 228.5 L296.2 228.5 L295.1 228.6 L294.1 228.6 L293.1 228.6 L292.2 228.6 L291.3 228.6 L290.5 228.6 L289.8 228.6 L289.1 228.6 L288.5 228.5 L288.0 228.5 L287.5 228.5 L287.1 228.4 L286.7 228.4 L286.4 228.4 L286.2 228.3 L286.1 228.3 L286.0 228.2 L286.0 228.2 L286.1 228.1 L286.2 228.1 L286.4 228.0 L286.7 228.0 L287.0 228.0 L287.4 227.9 L287.9 227.9 L288.4 227.9 L289.0 227.8 L289.7 227.8 L290.4 227.8 L291.2 227.8 L292.1 227.8 L293.0 227.8 L293.9 227.8 L295.0 227.8 L296.0 227.9 L297.2 227.9 L298.3 228.0 L299.6 228.0 L300.9 228.1 L302.2 228.2 L303.5 228.3 L304.9 228.4 L306.4 228.5 L307.9 228.6 L309.4 228.7 L310.9 228.9 L312.5 229.0 L314.1 229.2 L315.7 229.4 L317.4 229.6 L319.1 229.8 L320.7 230.1 L322.4 230.3 L324.1 230.6 L325.9 230.8 L327.6 231.1 L329.3 231.4 L331.0 231.7 L332.7 232.1 L334.4 232.4 L336.1 232.8 L337.8 233.1 L339.5 233.5 L341.2 233.9 L342.8 234.3 L344.4 234.8 L346.0 235.2 L347.6 235.6 L349.1 236.1 L350.6 236.6 L352.1 237.1 L353.5 237.6 L354.9 238.1 L356.3 238.6 L357.6 239.1 L358.9 239.7 L360.1 240.2 L361.2 240.8 L362.3 241.4 L363.4 242.0 L364.4 242.6 L365.4 243.2 L366.2 243.8 L367.1 244.4 L367.8 245.0 L368.6 245.6 L369.2 246.3 L369.8 246.9 L370.3 247.5 L370.7 248.2 L371.1 248.8 L371.4 249.5 L371.7 250.1 L371.9 250.8 L372.0 251.4 L372.0 252.1 L372.0 252.8 L371.9 253.4 L371.7 254.1 L371.5 254.7 L371.2 255.4 L370.8 256.0 L370.4 256.7 L369.9 257.3 L369.3 258.0 L368.6 258.6 L367.9 259.2 L367.2 259.8 L366.4 260.5 L365.5 261.1 L364.5 261.7 L363.5 262.3 L362.5 262.8 L361.4 263.4 L360.2 264.0 L359.0 264.5 L357.8 265.1 L356.5 265.6 L355.1 266.1 L353.7 266.7 L352.3 267.2 L350.8 267.6 L349.3 268.1 L347.8 268.6 L346.2 269.0 L344.7 269.5 L343.0 269.9 L341.4 270.3 L339.7 270.7 L338.1 271.1 L336.4 271.5 L334.7 271.8 L333.0 272.2 L331.3 272.5 L329.5 272.8 L327.8 273.1 L326.1 273.4 L324.4 273.7 L322.7 274.0 L321.0 274.2 L319.3 274.4 L317.6 274.7 L316.0 274.9 L314.3 275.0 L312.7 275.2 L311.2 275.4 L309.6 275.5 L308.1 275.7 L306.6 275.8 L305.1 275.9 L303.7 276.0 L302.4 276.1 L301.0 276.2 L299.7 276.3 L298.5 276.3 L297.3 276.4 L296.2 276.4 L295.1 276.5 L294.1 276.5 L293.1 276.5 L292.2 276.5 L291.3 276.5 L290.5 276.5 L289.8 276.5 L289.1 276.5 L288.5 276.4 L287.9 276.4 L287.5 276.4 L287.1 276.3 L286.7 276.3 L286.4 276.3 L286.2 276.2 L286.1 276.2 L286.0 276.1 L286.0 276.1 L286.1 276.0 L286.2 276.0 L286.4 275.9 L286.7 275.9 L287.0 275.9 L287.4 275.8 L287.9 275.8 L288.4 275.8 L289.0 275.7 L289.7 275.7 L290.4 275.7 L291.2 275.7 L292.1 275.7 L293.0 275.7 L294.0 275.7 L295.0 275.7 L296.1 275.8 L297.2 275.8 L298.4 275.9 L299.6 275.9 L300.9 276.0 L302.2 276.1 L303.6 276.2 L305.0 276.3 L306.4 276.4 L307.9 276.5 L309.4 276.6 L311.0 276.8 L312.6 277.0 L314.2 277.1 L315.8 277.3 L317.5 277.5 L319.1 277.7 L320.8 278.0 L322.5 278.2 L324.2 278.5 L325.9 278.8 L327.6 279.0 L329.4 279.3 L331.1 279.7 L332.8 280.0 L334.5 280.3 L336.2 280.7 L337.9 281.1 L339.6 281.4 L341.2 281.8 L342.9 282.3 L344.5 282.7 L346.1 283.1 L347.7 283.6 L349.2 284.0 L350.7 284.5 L352.2 285.0 L353.6 285.5 L355.0 286.0 L356.3 286.5 L357.6 287.1 L358.9 287.6 L360.1 288.2 L361.3 288.7 L362.4 289.3 L363.4 289.9 L364.4 290.5 L365.4 291.1 L366.3 291.7 L367.1 292.3 L367.9 292.9 L368.6 293.5 L369.2 294.2 L369.8 294.8 L370.3 295.5 L370.8 296.1 L371.1 296.8 L371.4 297.4 L371.7 298.1 L371.9 298.7 L372.0 299.4 L372.0 300.0 L372.0 300.7 L371.9 301.3 L371.7 302.0 L371.5 302.7 L371.2 303.3 L370.8 304.0 L370.3 304.6 L369.8 305.2 L369.3 305.9 L368.6 306.5 L367.9 307.1 L367.2 307.8 L366.3 308.4 L365.5 309.0 L364.5 309.6 L363.5 310.2 L362.5 310.8 L361.4 311.3 L360.2 311.9 L359.0 312.5 L357.7 313.0 L356.4 313.5 L355.1 314.1 L353.7 314.6 L352.3 315.1 L350.8 315.6 L349.3 316.0 L347.8 316.5 L346.2 317.0 L344.6 317.4 L343.0 317.8 L341.3 318.2 L339.7 318.6 L338.0 319.0 L336.3 319.4 L334.6 319.8 L332.9 320.1 L331.2 320.4 L329.5 320.7 L327.8 321.0 L326.0 321.3 L324.3 321.6 L322.6 321.9 L320.9 322.1 L319.2 322.3" stroke-linejoin="round" fill="none" stroke="#c4b000" stroke-width="8.4" transform="translate(0,-0.8)"/><path d="M294.2 84.9 L293.2 84.9 L292.3 84.9 L291.4 84.9 L290.6 84.9 L289.9 84.9 L289.2 84.9 L288.6 84.8 L288.0 84.8 L287.5 84.8 L287.1 84.8 L286.8 84.7 L286.5 84.7 L286.3 84.6 L286.1 84.6 L286.0 84.5 L286.0 84.5 L286.1 84.4 L286.2 84.4 L286.4 84.3 L286.6 84.3 L287.0 84.3 L287.4 84.2 L287.8 84.2 L288.4 84.2 L288.9 84.1 L289.6 84.1 L290.3 84.1 L291.1 84.1 L292.0 84.1 L292.9 84.1 L293.8 84.1 L294.8 84.1 L295.9 84.2 L297.0 84.2 L298.2 84.2 L299.4 84.3 L300.7 84.4 L302.0 84.5 L303.4 84.5 L304.8 84.6 L306.2 84.8 L307.7 84.9 L309.2 85.0 L310.8 85.2 L312.3 85.3 L313.9 85.5 L315.6 85.7 L317.2 85.9 L318.9 86.1 L320.6 86.3 L322.3 86.6 L324.0 86.8 L325.7 87.1 L327.4 87.4 L329.1 87.7 L330.8 88.0 L332.5 88.3 L334.3 88.7 L336.0 89.0 L337.7 89.4 L339.3 89.8 L341.0 90.2 L342.6 90.6 L344.3 91.0 L345.9 91.5 L347.4 91.9 L349.0 92.4 L350.5 92.8 L351.9 93.3 L353.4 93.8 L354.8 94.3 L356.1 94.9 L357.5 95.4 L358.7 95.9 L359.9 96.5 L361.1 97.0 L362.2 97.6 L363.3 98.2 L364.3 98.8 L365.3 99.4 L366.2 100.0 L367.0 100.6 L367.8 101.2 L368.5 101.9 L369.1 102.5 L369.7 103.1 L370.2 103.8 L370.7 104.4 L371.1 105.1 L371.4 105.7 L371.7 106.4 L371.8 107.0 L372.0 107.7 L372.0 108.3 L372.0 109.0 L371.9 109.6 L371.7 110.3 L371.5 111.0 L371.2 111.6 L370.8 112.3 L370.4 112.9 L369.9 113.5 L369.3 114.2 L368.7 114.8 L368.0 115.4 L367.3 116.1 L366.5 116.7 L365.6 117.3 L364.7 117.9 L363.7 118.5 L362.6 119.1 L361.5 119.6 L360.4 120.2 L359.2 120.8 L357.9 121.3 L356.6 121.9 L355.3 122.4 L353.9 122.9 L352.5 123.4 L351.0 123.9 L349.5 124.4 L348.0 124.8 L346.4 125.3 L344.8 125.7 L343.2 126.2 L341.6 126.6 L339.9 127.0 L338.3 127.4 L336.6 127.7 L334.9 128.1 L333.2 128.4 L331.4 128.8 L329.7 129.1 L328.0 129.4 L326.3 129.7 L324.6 130.0 L322.9 130.2 L321.2 130.5 L319.5 130.7 L317.8 130.9 L316.2 131.1 L314.5 131.3 L312.9 131.5 L311.3 131.7 L309.8 131.8 L308.2 132.0 L306.8 132.1 L305.3 132.2 L303.9 132.3 L302.5 132.4 L301.2 132.5 L299.9 132.6 L298.6 132.6 L297.4 132.7 L296.3 132.7 L295.2 132.8 L294.2 132.8 L293.2 132.8 L292.3 132.8 L291.4 132.8 L290.6 132.8 L289.9 132.8 L289.2 132.8 L288.6 132.7 L288.0 132.7 L287.5 132.7 L287.1 132.6 L286.7 132.6 L286.5 132.6 L286.2 132.5 L286.1 132.5 L286.0 132.4 L286.0 132.4 L286.1 132.3 L286.2 132.3 L286.4 132.2 L286.6 132.2 L287.0 132.2 L287.4 132.1 L287.8 132.1 L288.4 132.1 L289.0 132.0 L289.6 132.0 L290.4 132.0 L291.1 132.0 L292.0 132.0 L292.9 132.0 L293.9 132.0 L294.9 132.0 L295.9 132.1 L297.1 132.1 L298.3 132.1 L299.5 132.2 L300.8 132.3 L302.1 132.4 L303.4 132.4 L304.8 132.5 L306.3 132.7 L307.8 132.8 L309.3 132.9 L310.8 133.1 L312.4 133.2 L314.0 133.4 L315.6 133.6 L317.3 133.8 L318.9 134.0 L320.6 134.2 L322.3 134.5 L324.0 134.7 L325.7 135.0 L327.4 135.3 L329.2 135.6 L330.9 135.9 L332.6 136.2 L334.3 136.6 L336.0 136.9 L337.7 137.3 L339.4 137.7 L341.1 138.1 L342.7 138.5 L344.3 138.9 L345.9 139.4 L347.5 139.8 L349.0 140.3 L350.5 140.8 L352.0 141.2 L353.4 141.7 L354.8 142.3 L356.2 142.8 L357.5 143.3 L358.8 143.9 L360.0 144.4 L361.2 145.0 L362.3 145.5 L363.3 146.1 L364.3 146.7 L365.3 147.3 L366.2 147.9 L367.0 148.5 L367.8 149.2 L368.5 149.8 L369.2 150.4 L369.7 151.0 L370.3 151.7 L370.7 152.3 L371.1 153.0 L371.4 153.6 L371.7 154.3 L371.8 154.9 L372.0 155.6 L372.0 156.3 L372.0 156.9 L371.9 157.6 L371.7 158.2 L371.5 158.9 L371.2 159.5 L370.8 160.2 L370.4 160.8 L369.9 161.5 L369.3 162.1 L368.7 162.7 L368.0 163.4 L367.2 164.0 L366.4 164.6 L365.6 165.2 L364.6 165.8 L363.6 166.4 L362.6 167.0 L361.5 167.6 L360.3 168.1 L359.1 168.7 L357.9 169.2 L356.6 169.8 L355.2 170.3 L353.8 170.8 L352.4 171.3 L350.9 171.8 L349.5 172.3 L347.9 172.8 L346.4 173.2 L344.8 173.6 L343.2 174.1 L341.5 174.5 L339.9 174.9 L338.2 175.3 L336.5 175.7 L334.8 176.0 L333.1 176.4 L331.4 176.7 L329.7 177.0 L327.9 177.3 L326.2 177.6 L324.5 177.9 L322.8 178.1 L321.1 178.4 L319.4 178.6 L317.7 178.8 L316.1 179.0 L314.5 179.2 L312.9 179.4 L311.3 179.6 L309.7 179.7 L308.2 179.9 L306.7 180.0 L305.3 180.1 L303.8 180.2 L302.5 180.3 L301.1 180.4 L299.8 180.5 L298.6 180.5 L297.4 180.6 L296.3 180.6 L295.2 180.7 L294.1 180.7 L293.2 180.7 L292.2 180.7 L291.4 180.7 L290.6 180.7 L289.8 180.7 L289.2 180.7 L288.5 180.6 L288.0 180.6 L287.5 180.6 L287.1 180.5 L286.7 180.5 L286.5 180.5 L286.2 180.4 L286.1 180.4 L286.0 180.3 L286.0 180.3 L286.1 180.2 L286.2 180.2 L286.4 180.1 L286.7 180.1 L287.0 180.1 L287.4 180.0 L287.9 180.0 L288.4 180.0 L289.0 179.9 L289.7 179.9 L290.4 179.9 L291.2 179.9 L292.0 179.9 L292.9 179.9 L293.9 179.9 L294.9 179.9 L296.0 180.0 L297.1 180.0 L298.3 180.1 L299.5 180.1 L300.8 180.2 L302.1 180.3 L303.5 180.3 L304.9 180.5 L306.3 180.6 L307.8 180.7 L309.3 180.8 L310.9 181.0 L312.5 181.1 L314.1 181.3 L315.7 181.5 L317.3 181.7 L319.0 181.9 L320.7 182.2 L322.4 182.4 L324.1 182.7 L325.8 182.9 L327.5 183.2 L329.2 183.5 L331.0 183.8 L332.7 184.2 L334.4 184.5 L336.1 184.9 L337.8 185.2 L339.5 185.6 L341.1 186.0 L342.8 186.4 L344.4 186.8 L346.0 187.3 L347.5 187.7 L349.1 188.2 L350.6 188.7 L352.1 189.2 L353.5 189.7 L354.9 190.2 L356.2 190.7 L357.5 191.2 L358.8 191.8 L360.0 192.3 L361.2 192.9 L362.3 193.5 L363.4 194.0 L364.4 194.6 L365.3 195.2 L366.2 195.8 L367.0 196.5 L367.8 197.1 L368.5 197.7 L369.2 198.3 L369.8 199.0 L370.3 199.6 L370.7 200.3 L371.1 200.9 L371.4 201.6 L371.7 202.2 L371.8 202.9 L372.0 203.5 L372.0 204.2 L372.0 204.8 L371.9 205.5 L371.7 206.2 L371.5 206.8 L371.2 207.5 L370.8 208.1 L370.4 208.8 L369.9 209.4 L369.3 210.0 L368.7 210.7 L368.0 211.3 L367.2 211.9 L366.4 212.5 L365.5 213.1 L364.6 213.7 L363.6 214.3 L362.5 214.9 L361.4 215.5 L360.3 216.1 L359.1 216.6 L357.8 217.2 L356.5 217.7 L355.2 218.2 L353.8 218.7 L352.4 219.2 L350.9 219.7 L349.4 220.2 L347.9 220.7 L346.3 221.1 L344.7 221.6 L343.1 222.0 L341.5 222.4 L339.8 222.8 L338.1 223.2 L336.4 223.6 L334.7 223.9 L333.0 224.3 L331.3 224.6 L329.6 224.9 L327.9 225.2 L326.2 225.5 L324.4 225.8 L322.7 226.0 L321.0 226.3 L319.4 226.5 L317.7 226.7 L316.0 227.0 L314.4 227.1 L312.8 227.3 L311.2 227.5 L309.7 227.6 L308.1 227.8 L306.7 227.9 L305.2 228.0 L303.8 228.1 L302.4 228.2 L301.1 228.3 L299.8 228.4 L298.6 228.4 L297.4 228.5 L296.2 228.5 L295.1 228.6 L294.1 228.6 L293.1 228.6 L292.2 228.6 L291.3 228.6 L290.5 228.6 L289.8 228.6 L289.1 228.6 L288.5 228.5 L288.0 228.5 L287.5 228.5 L287.1 228.4 L286.7 228.4 L286.4 228.4 L286.2 228.3 L286.1 228.3 L286.0 228.2 L286.0 228.2 L286.1 228.1 L286.2 228.1 L286.4 228.0 L286.7 228.0 L287.0 228.0 L287.4 227.9 L287.9 227.9 L288.4 227.9 L289.0 227.8 L289.7 227.8 L290.4 227.8 L291.2 227.8 L292.1 227.8 L293.0 227.8 L293.9 227.8 L295.0 227.8 L296.0 227.9 L297.2 227.9 L298.3 228.0 L299.6 228.0 L300.9 228.1 L302.2 228.2 L303.5 228.3 L304.9 228.4 L306.4 228.5 L307.9 228.6 L309.4 228.7 L310.9 228.9 L312.5 229.0 L314.1 229.2 L315.7 229.4 L317.4 229.6 L319.1 229.8 L320.7 230.1 L322.4 230.3 L324.1 230.6 L325.9 230.8 L327.6 231.1 L329.3 231.4 L331.0 231.7 L332.7 232.1 L334.4 232.4 L336.1 232.8 L337.8 233.1 L339.5 233.5 L341.2 233.9 L342.8 234.3 L344.4 234.8 L346.0 235.2 L347.6 235.6 L349.1 236.1 L350.6 236.6 L352.1 237.1 L353.5 237.6 L354.9 238.1 L356.3 238.6 L357.6 239.1 L358.9 239.7 L360.1 240.2 L361.2 240.8 L362.3 241.4 L363.4 242.0 L364.4 242.6 L365.4 243.2 L366.2 243.8 L367.1 244.4 L367.8 245.0 L368.6 245.6 L369.2 246.3 L369.8 246.9 L370.3 247.5 L370.7 248.2 L371.1 248.8 L371.4 249.5 L371.7 250.1 L371.9 250.8 L372.0 251.4 L372.0 252.1 L372.0 252.8 L371.9 253.4 L371.7 254.1 L371.5 254.7 L371.2 255.4 L370.8 256.0 L370.4 256.7 L369.9 257.3 L369.3 258.0 L368.6 258.6 L367.9 259.2 L367.2 259.8 L366.4 260.5 L365.5 261.1 L364.5 261.7 L363.5 262.3 L362.5 262.8 L361.4 263.4 L360.2 264.0 L359.0 264.5 L357.8 265.1 L356.5 265.6 L355.1 266.1 L353.7 266.7 L352.3 267.2 L350.8 267.6 L349.3 268.1 L347.8 268.6 L346.2 269.0 L344.7 269.5 L343.0 269.9 L341.4 270.3 L339.7 270.7 L338.1 271.1 L336.4 271.5 L334.7 271.8 L333.0 272.2 L331.3 272.5 L329.5 272.8 L327.8 273.1 L326.1 273.4 L324.4 273.7 L322.7 274.0 L321.0 274.2 L319.3 274.4 L317.6 274.7 L316.0 274.9 L314.3 275.0 L312.7 275.2 L311.2 275.4 L309.6 275.5 L308.1 275.7 L306.6 275.8 L305.1 275.9 L303.7 276.0 L302.4 276.1 L301.0 276.2 L299.7 276.3 L298.5 276.3 L297.3 276.4 L296.2 276.4 L295.1 276.5 L294.1 276.5 L293.1 276.5 L292.2 276.5 L291.3 276.5 L290.5 276.5 L289.8 276.5 L289.1 276.5 L288.5 276.4 L287.9 276.4 L287.5 276.4 L287.1 276.3 L286.7 276.3 L286.4 276.3 L286.2 276.2 L286.1 276.2 L286.0 276.1 L286.0 276.1 L286.1 276.0 L286.2 276.0 L286.4 275.9 L286.7 275.9 L287.0 275.9 L287.4 275.8 L287.9 275.8 L288.4 275.8 L289.0 275.7 L289.7 275.7 L290.4 275.7 L291.2 275.7 L292.1 275.7 L293.0 275.7 L294.0 275.7 L295.0 275.7 L296.1 275.8 L297.2 275.8 L298.4 275.9 L299.6 275.9 L300.9 276.0 L302.2 276.1 L303.6 276.2 L305.0 276.3 L306.4 276.4 L307.9 276.5 L309.4 276.6 L311.0 276.8 L312.6 277.0 L314.2 277.1 L315.8 277.3 L317.5 277.5 L319.1 277.7 L320.8 278.0 L322.5 278.2 L324.2 278.5 L325.9 278.8 L327.6 279.0 L329.4 279.3 L331.1 279.7 L332.8 280.0 L334.5 280.3 L336.2 280.7 L337.9 281.1 L339.6 281.4 L341.2 281.8 L342.9 282.3 L344.5 282.7 L346.1 283.1 L347.7 283.6 L349.2 284.0 L350.7 284.5 L352.2 285.0 L353.6 285.5 L355.0 286.0 L356.3 286.5 L357.6 287.1 L358.9 287.6 L360.1 288.2 L361.3 288.7 L362.4 289.3 L363.4 289.9 L364.4 290.5 L365.4 291.1 L366.3 291.7 L367.1 292.3 L367.9 292.9 L368.6 293.5 L369.2 294.2 L369.8 294.8 L370.3 295.5 L370.8 296.1 L371.1 296.8 L371.4 297.4 L371.7 298.1 L371.9 298.7 L372.0 299.4 L372.0 300.0 L372.0 300.7 L371.9 301.3 L371.7 302.0 L371.5 302.7 L371.2 303.3 L370.8 304.0 L370.3 304.6 L369.8 305.2 L369.3 305.9 L368.6 306.5 L367.9 307.1 L367.2 307.8 L366.3 308.4 L365.5 309.0 L364.5 309.6 L363.5 310.2 L362.5 310.8 L361.4 311.3 L360.2 311.9 L359.0 312.5 L357.7 313.0 L356.4 313.5 L355.1 314.1 L353.7 314.6 L352.3 315.1 L350.8 315.6 L349.3 316.0 L347.8 316.5 L346.2 317.0 L344.6 317.4 L343.0 317.8 L341.3 318.2 L339.7 318.6 L338.0 319.0 L336.3 319.4 L334.6 319.8 L332.9 320.1 L331.2 320.4 L329.5 320.7 L327.8 321.0 L326.0 321.3 L324.3 321.6 L322.6 321.9 L320.9 322.1 L319.2 322.3" stroke-linejoin="round" fill="none" stroke="#e8d800" stroke-width="5.6" transform="translate(0,-1.5)"/><path d="M294.2 84.9 L293.2 84.9 L292.3 84.9 L291.4 84.9 L290.6 84.9 L289.9 84.9 L289.2 84.9 L288.6 84.8 L288.0 84.8 L287.5 84.8 L287.1 84.8 L286.8 84.7 L286.5 84.7 L286.3 84.6 L286.1 84.6 L286.0 84.5 L286.0 84.5 L286.1 84.4 L286.2 84.4 L286.4 84.3 L286.6 84.3 L287.0 84.3 L287.4 84.2 L287.8 84.2 L288.4 84.2 L288.9 84.1 L289.6 84.1 L290.3 84.1 L291.1 84.1 L292.0 84.1 L292.9 84.1 L293.8 84.1 L294.8 84.1 L295.9 84.2 L297.0 84.2 L298.2 84.2 L299.4 84.3 L300.7 84.4 L302.0 84.5 L303.4 84.5 L304.8 84.6 L306.2 84.8 L307.7 84.9 L309.2 85.0 L310.8 85.2 L312.3 85.3 L313.9 85.5 L315.6 85.7 L317.2 85.9 L318.9 86.1 L320.6 86.3 L322.3 86.6 L324.0 86.8 L325.7 87.1 L327.4 87.4 L329.1 87.7 L330.8 88.0 L332.5 88.3 L334.3 88.7 L336.0 89.0 L337.7 89.4 L339.3 89.8 L341.0 90.2 L342.6 90.6 L344.3 91.0 L345.9 91.5 L347.4 91.9 L349.0 92.4 L350.5 92.8 L351.9 93.3 L353.4 93.8 L354.8 94.3 L356.1 94.9 L357.5 95.4 L358.7 95.9 L359.9 96.5 L361.1 97.0 L362.2 97.6 L363.3 98.2 L364.3 98.8 L365.3 99.4 L366.2 100.0 L367.0 100.6 L367.8 101.2 L368.5 101.9 L369.1 102.5 L369.7 103.1 L370.2 103.8 L370.7 104.4 L371.1 105.1 L371.4 105.7 L371.7 106.4 L371.8 107.0 L372.0 107.7 L372.0 108.3 L372.0 109.0 L371.9 109.6 L371.7 110.3 L371.5 111.0 L371.2 111.6 L370.8 112.3 L370.4 112.9 L369.9 113.5 L369.3 114.2 L368.7 114.8 L368.0 115.4 L367.3 116.1 L366.5 116.7 L365.6 117.3 L364.7 117.9 L363.7 118.5 L362.6 119.1 L361.5 119.6 L360.4 120.2 L359.2 120.8 L357.9 121.3 L356.6 121.9 L355.3 122.4 L353.9 122.9 L352.5 123.4 L351.0 123.9 L349.5 124.4 L348.0 124.8 L346.4 125.3 L344.8 125.7 L343.2 126.2 L341.6 126.6 L339.9 127.0 L338.3 127.4 L336.6 127.7 L334.9 128.1 L333.2 128.4 L331.4 128.8 L329.7 129.1 L328.0 129.4 L326.3 129.7 L324.6 130.0 L322.9 130.2 L321.2 130.5 L319.5 130.7 L317.8 130.9 L316.2 131.1 L314.5 131.3 L312.9 131.5 L311.3 131.7 L309.8 131.8 L308.2 132.0 L306.8 132.1 L305.3 132.2 L303.9 132.3 L302.5 132.4 L301.2 132.5 L299.9 132.6 L298.6 132.6 L297.4 132.7 L296.3 132.7 L295.2 132.8 L294.2 132.8 L293.2 132.8 L292.3 132.8 L291.4 132.8 L290.6 132.8 L289.9 132.8 L289.2 132.8 L288.6 132.7 L288.0 132.7 L287.5 132.7 L287.1 132.6 L286.7 132.6 L286.5 132.6 L286.2 132.5 L286.1 132.5 L286.0 132.4 L286.0 132.4 L286.1 132.3 L286.2 132.3 L286.4 132.2 L286.6 132.2 L287.0 132.2 L287.4 132.1 L287.8 132.1 L288.4 132.1 L289.0 132.0 L289.6 132.0 L290.4 132.0 L291.1 132.0 L292.0 132.0 L292.9 132.0 L293.9 132.0 L294.9 132.0 L295.9 132.1 L297.1 132.1 L298.3 132.1 L299.5 132.2 L300.8 132.3 L302.1 132.4 L303.4 132.4 L304.8 132.5 L306.3 132.7 L307.8 132.8 L309.3 132.9 L310.8 133.1 L312.4 133.2 L314.0 133.4 L315.6 133.6 L317.3 133.8 L318.9 134.0 L320.6 134.2 L322.3 134.5 L324.0 134.7 L325.7 135.0 L327.4 135.3 L329.2 135.6 L330.9 135.9 L332.6 136.2 L334.3 136.6 L336.0 136.9 L337.7 137.3 L339.4 137.7 L341.1 138.1 L342.7 138.5 L344.3 138.9 L345.9 139.4 L347.5 139.8 L349.0 140.3 L350.5 140.8 L352.0 141.2 L353.4 141.7 L354.8 142.3 L356.2 142.8 L357.5 143.3 L358.8 143.9 L360.0 144.4 L361.2 145.0 L362.3 145.5 L363.3 146.1 L364.3 146.7 L365.3 147.3 L366.2 147.9 L367.0 148.5 L367.8 149.2 L368.5 149.8 L369.2 150.4 L369.7 151.0 L370.3 151.7 L370.7 152.3 L371.1 153.0 L371.4 153.6 L371.7 154.3 L371.8 154.9 L372.0 155.6 L372.0 156.3 L372.0 156.9 L371.9 157.6 L371.7 158.2 L371.5 158.9 L371.2 159.5 L370.8 160.2 L370.4 160.8 L369.9 161.5 L369.3 162.1 L368.7 162.7 L368.0 163.4 L367.2 164.0 L366.4 164.6 L365.6 165.2 L364.6 165.8 L363.6 166.4 L362.6 167.0 L361.5 167.6 L360.3 168.1 L359.1 168.7 L357.9 169.2 L356.6 169.8 L355.2 170.3 L353.8 170.8 L352.4 171.3 L350.9 171.8 L349.5 172.3 L347.9 172.8 L346.4 173.2 L344.8 173.6 L343.2 174.1 L341.5 174.5 L339.9 174.9 L338.2 175.3 L336.5 175.7 L334.8 176.0 L333.1 176.4 L331.4 176.7 L329.7 177.0 L327.9 177.3 L326.2 177.6 L324.5 177.9 L322.8 178.1 L321.1 178.4 L319.4 178.6 L317.7 178.8 L316.1 179.0 L314.5 179.2 L312.9 179.4 L311.3 179.6 L309.7 179.7 L308.2 179.9 L306.7 180.0 L305.3 180.1 L303.8 180.2 L302.5 180.3 L301.1 180.4 L299.8 180.5 L298.6 180.5 L297.4 180.6 L296.3 180.6 L295.2 180.7 L294.1 180.7 L293.2 180.7 L292.2 180.7 L291.4 180.7 L290.6 180.7 L289.8 180.7 L289.2 180.7 L288.5 180.6 L288.0 180.6 L287.5 180.6 L287.1 180.5 L286.7 180.5 L286.5 180.5 L286.2 180.4 L286.1 180.4 L286.0 180.3 L286.0 180.3 L286.1 180.2 L286.2 180.2 L286.4 180.1 L286.7 180.1 L287.0 180.1 L287.4 180.0 L287.9 180.0 L288.4 180.0 L289.0 179.9 L289.7 179.9 L290.4 179.9 L291.2 179.9 L292.0 179.9 L292.9 179.9 L293.9 179.9 L294.9 179.9 L296.0 180.0 L297.1 180.0 L298.3 180.1 L299.5 180.1 L300.8 180.2 L302.1 180.3 L303.5 180.3 L304.9 180.5 L306.3 180.6 L307.8 180.7 L309.3 180.8 L310.9 181.0 L312.5 181.1 L314.1 181.3 L315.7 181.5 L317.3 181.7 L319.0 181.9 L320.7 182.2 L322.4 182.4 L324.1 182.7 L325.8 182.9 L327.5 183.2 L329.2 183.5 L331.0 183.8 L332.7 184.2 L334.4 184.5 L336.1 184.9 L337.8 185.2 L339.5 185.6 L341.1 186.0 L342.8 186.4 L344.4 186.8 L346.0 187.3 L347.5 187.7 L349.1 188.2 L350.6 188.7 L352.1 189.2 L353.5 189.7 L354.9 190.2 L356.2 190.7 L357.5 191.2 L358.8 191.8 L360.0 192.3 L361.2 192.9 L362.3 193.5 L363.4 194.0 L364.4 194.6 L365.3 195.2 L366.2 195.8 L367.0 196.5 L367.8 197.1 L368.5 197.7 L369.2 198.3 L369.8 199.0 L370.3 199.6 L370.7 200.3 L371.1 200.9 L371.4 201.6 L371.7 202.2 L371.8 202.9 L372.0 203.5 L372.0 204.2 L372.0 204.8 L371.9 205.5 L371.7 206.2 L371.5 206.8 L371.2 207.5 L370.8 208.1 L370.4 208.8 L369.9 209.4 L369.3 210.0 L368.7 210.7 L368.0 211.3 L367.2 211.9 L366.4 212.5 L365.5 213.1 L364.6 213.7 L363.6 214.3 L362.5 214.9 L361.4 215.5 L360.3 216.1 L359.1 216.6 L357.8 217.2 L356.5 217.7 L355.2 218.2 L353.8 218.7 L352.4 219.2 L350.9 219.7 L349.4 220.2 L347.9 220.7 L346.3 221.1 L344.7 221.6 L343.1 222.0 L341.5 222.4 L339.8 222.8 L338.1 223.2 L336.4 223.6 L334.7 223.9 L333.0 224.3 L331.3 224.6 L329.6 224.9 L327.9 225.2 L326.2 225.5 L324.4 225.8 L322.7 226.0 L321.0 226.3 L319.4 226.5 L317.7 226.7 L316.0 227.0 L314.4 227.1 L312.8 227.3 L311.2 227.5 L309.7 227.6 L308.1 227.8 L306.7 227.9 L305.2 228.0 L303.8 228.1 L302.4 228.2 L301.1 228.3 L299.8 228.4 L298.6 228.4 L297.4 228.5 L296.2 228.5 L295.1 228.6 L294.1 228.6 L293.1 228.6 L292.2 228.6 L291.3 228.6 L290.5 228.6 L289.8 228.6 L289.1 228.6 L288.5 228.5 L288.0 228.5 L287.5 228.5 L287.1 228.4 L286.7 228.4 L286.4 228.4 L286.2 228.3 L286.1 228.3 L286.0 228.2 L286.0 228.2 L286.1 228.1 L286.2 228.1 L286.4 228.0 L286.7 228.0 L287.0 228.0 L287.4 227.9 L287.9 227.9 L288.4 227.9 L289.0 227.8 L289.7 227.8 L290.4 227.8 L291.2 227.8 L292.1 227.8 L293.0 227.8 L293.9 227.8 L295.0 227.8 L296.0 227.9 L297.2 227.9 L298.3 228.0 L299.6 228.0 L300.9 228.1 L302.2 228.2 L303.5 228.3 L304.9 228.4 L306.4 228.5 L307.9 228.6 L309.4 228.7 L310.9 228.9 L312.5 229.0 L314.1 229.2 L315.7 229.4 L317.4 229.6 L319.1 229.8 L320.7 230.1 L322.4 230.3 L324.1 230.6 L325.9 230.8 L327.6 231.1 L329.3 231.4 L331.0 231.7 L332.7 232.1 L334.4 232.4 L336.1 232.8 L337.8 233.1 L339.5 233.5 L341.2 233.9 L342.8 234.3 L344.4 234.8 L346.0 235.2 L347.6 235.6 L349.1 236.1 L350.6 236.6 L352.1 237.1 L353.5 237.6 L354.9 238.1 L356.3 238.6 L357.6 239.1 L358.9 239.7 L360.1 240.2 L361.2 240.8 L362.3 241.4 L363.4 242.0 L364.4 242.6 L365.4 243.2 L366.2 243.8 L367.1 244.4 L367.8 245.0 L368.6 245.6 L369.2 246.3 L369.8 246.9 L370.3 247.5 L370.7 248.2 L371.1 248.8 L371.4 249.5 L371.7 250.1 L371.9 250.8 L372.0 251.4 L372.0 252.1 L372.0 252.8 L371.9 253.4 L371.7 254.1 L371.5 254.7 L371.2 255.4 L370.8 256.0 L370.4 256.7 L369.9 257.3 L369.3 258.0 L368.6 258.6 L367.9 259.2 L367.2 259.8 L366.4 260.5 L365.5 261.1 L364.5 261.7 L363.5 262.3 L362.5 262.8 L361.4 263.4 L360.2 264.0 L359.0 264.5 L357.8 265.1 L356.5 265.6 L355.1 266.1 L353.7 266.7 L352.3 267.2 L350.8 267.6 L349.3 268.1 L347.8 268.6 L346.2 269.0 L344.7 269.5 L343.0 269.9 L341.4 270.3 L339.7 270.7 L338.1 271.1 L336.4 271.5 L334.7 271.8 L333.0 272.2 L331.3 272.5 L329.5 272.8 L327.8 273.1 L326.1 273.4 L324.4 273.7 L322.7 274.0 L321.0 274.2 L319.3 274.4 L317.6 274.7 L316.0 274.9 L314.3 275.0 L312.7 275.2 L311.2 275.4 L309.6 275.5 L308.1 275.7 L306.6 275.8 L305.1 275.9 L303.7 276.0 L302.4 276.1 L301.0 276.2 L299.7 276.3 L298.5 276.3 L297.3 276.4 L296.2 276.4 L295.1 276.5 L294.1 276.5 L293.1 276.5 L292.2 276.5 L291.3 276.5 L290.5 276.5 L289.8 276.5 L289.1 276.5 L288.5 276.4 L287.9 276.4 L287.5 276.4 L287.1 276.3 L286.7 276.3 L286.4 276.3 L286.2 276.2 L286.1 276.2 L286.0 276.1 L286.0 276.1 L286.1 276.0 L286.2 276.0 L286.4 275.9 L286.7 275.9 L287.0 275.9 L287.4 275.8 L287.9 275.8 L288.4 275.8 L289.0 275.7 L289.7 275.7 L290.4 275.7 L291.2 275.7 L292.1 275.7 L293.0 275.7 L294.0 275.7 L295.0 275.7 L296.1 275.8 L297.2 275.8 L298.4 275.9 L299.6 275.9 L300.9 276.0 L302.2 276.1 L303.6 276.2 L305.0 276.3 L306.4 276.4 L307.9 276.5 L309.4 276.6 L311.0 276.8 L312.6 277.0 L314.2 277.1 L315.8 277.3 L317.5 277.5 L319.1 277.7 L320.8 278.0 L322.5 278.2 L324.2 278.5 L325.9 278.8 L327.6 279.0 L329.4 279.3 L331.1 279.7 L332.8 280.0 L334.5 280.3 L336.2 280.7 L337.9 281.1 L339.6 281.4 L341.2 281.8 L342.9 282.3 L344.5 282.7 L346.1 283.1 L347.7 283.6 L349.2 284.0 L350.7 284.5 L352.2 285.0 L353.6 285.5 L355.0 286.0 L356.3 286.5 L357.6 287.1 L358.9 287.6 L360.1 288.2 L361.3 288.7 L362.4 289.3 L363.4 289.9 L364.4 290.5 L365.4 291.1 L366.3 291.7 L367.1 292.3 L367.9 292.9 L368.6 293.5 L369.2 294.2 L369.8 294.8 L370.3 295.5 L370.8 296.1 L371.1 296.8 L371.4 297.4 L371.7 298.1 L371.9 298.7 L372.0 299.4 L372.0 300.0 L372.0 300.7 L371.9 301.3 L371.7 302.0 L371.5 302.7 L371.2 303.3 L370.8 304.0 L370.3 304.6 L369.8 305.2 L369.3 305.9 L368.6 306.5 L367.9 307.1 L367.2 307.8 L366.3 308.4 L365.5 309.0 L364.5 309.6 L363.5 310.2 L362.5 310.8 L361.4 311.3 L360.2 311.9 L359.0 312.5 L357.7 313.0 L356.4 313.5 L355.1 314.1 L353.7 314.6 L352.3 315.1 L350.8 315.6 L349.3 316.0 L347.8 316.5 L346.2 317.0 L344.6 317.4 L343.0 317.8 L341.3 318.2 L339.7 318.6 L338.0 319.0 L336.3 319.4 L334.6 319.8 L332.9 320.1 L331.2 320.4 L329.5 320.7 L327.8 321.0 L326.0 321.3 L324.3 321.6 L322.6 321.9 L320.9 322.1 L319.2 322.3" stroke-linejoin="round" fill="none" stroke="#fcf000" stroke-width="2.4" transform="translate(0,-2.2)"/><rect x="317.5" y="78" width="23.5" height="238" fill="url(#gb)"/><rect x="305" y="135" width="48" height="120" fill="url(#gr)"/><ellipse cx="329" cy="135" rx="24" ry="2.5" fill="#c00000"/><ellipse cx="329" cy="255" rx="24" ry="3.5" fill="url(#gr)"/><path d="M294.2 84.9 L293.2 84.9 L292.3 84.9 L291.4 84.9 L290.6 84.9 L289.8 84.9 L289.1 84.9 L288.5 84.8 L287.9 84.8 L287.4 84.8 L287.0 84.7 L286.7 84.7 L286.4 84.7 L286.2 84.6 L286.1 84.6 L286.0 84.5 L286.0 84.5 L286.1 84.4 L286.3 84.4 L286.5 84.3" stroke-linejoin="round" fill="none" stroke="#3a3200" stroke-width="12.5"/><path d="M294.2 84.9 L293.2 84.9 L292.3 84.9 L291.4 84.9 L290.6 84.9 L289.8 84.9 L289.1 84.9 L288.5 84.8 L287.9 84.8 L287.4 84.8 L287.0 84.7 L286.7 84.7 L286.4 84.7 L286.2 84.6 L286.1 84.6 L286.0 84.5 L286.0 84.5 L286.1 84.4 L286.3 84.4 L286.5 84.3" stroke-linejoin="round" fill="none" stroke="#8c7c00" stroke-width="10.8"/><path d="M294.2 84.9 L293.2 84.9 L292.3 84.9 L291.4 84.9 L290.6 84.9 L289.8 84.9 L289.1 84.9 L288.5 84.8 L287.9 84.8 L287.4 84.8 L287.0 84.7 L286.7 84.7 L286.4 84.7 L286.2 84.6 L286.1 84.6 L286.0 84.5 L286.0 84.5 L286.1 84.4 L286.3 84.4 L286.5 84.3" stroke-linejoin="round" fill="none" stroke="#c4b000" stroke-width="8.4" transform="translate(0,-0.8)"/><path d="M294.2 84.9 L293.2 84.9 L292.3 84.9 L291.4 84.9 L290.6 84.9 L289.8 84.9 L289.1 84.9 L288.5 84.8 L287.9 84.8 L287.4 84.8 L287.0 84.7 L286.7 84.7 L286.4 84.7 L286.2 84.6 L286.1 84.6 L286.0 84.5 L286.0 84.5 L286.1 84.4 L286.3 84.4 L286.5 84.3" stroke-linejoin="round" fill="none" stroke="#e8d800" stroke-width="5.6" transform="translate(0,-1.5)"/><path d="M294.2 84.9 L293.2 84.9 L292.3 84.9 L291.4 84.9 L290.6 84.9 L289.8 84.9 L289.1 84.9 L288.5 84.8 L287.9 84.8 L287.4 84.8 L287.0 84.7 L286.7 84.7 L286.4 84.7 L286.2 84.6 L286.1 84.6 L286.0 84.5 L286.0 84.5 L286.1 84.4 L286.3 84.4 L286.5 84.3" stroke-linejoin="round" fill="none" stroke="#fcf000" stroke-width="2.4" transform="translate(0,-2.2)"/><path d="M371.5 106.0 L371.7 106.6 L371.9 107.3 L372.0 108.0 L372.0 108.6 L371.9 109.3 L371.8 109.9 L371.6 110.6 L371.4 111.2 L371.1 111.9 L370.7 112.5 L370.2 113.2 L369.7 113.8 L369.1 114.5 L368.4 115.1 L367.7 115.7 L366.9 116.3 L366.1 116.9 L365.2 117.5 L364.2 118.1 L363.2 118.7 L362.2 119.3 L361.0 119.9 L359.9 120.5 L358.6 121.0 L357.4 121.5 L356.0 122.1 L354.7 122.6 L353.3 123.1 L351.9 123.6 L350.4 124.1 L348.9 124.6 L347.3 125.0 L345.8 125.5 L344.2 125.9 L342.5 126.3 L340.9 126.7 L339.2 127.1 L337.5 127.5 L335.9 127.9 L334.1 128.2 L332.4 128.6 L330.7 128.9 L329.0 129.2 L327.3 129.5 L325.6 129.8 L323.9 130.1 L322.1 130.3 L320.5 130.6 L318.8 130.8 L317.1 131.0 L315.5 131.2 L313.8 131.4 L312.2 131.6 L310.7 131.7 L309.1 131.9 L307.6 132.0 L306.1 132.2 L304.7 132.3 L303.3 132.4 L302.0 132.5 L300.6 132.5 L299.4 132.6 L298.1 132.7 L297.0 132.7 L295.8 132.7 L294.8 132.8 L293.8 132.8 L292.8 132.8 L291.9 132.8 L291.1 132.8 L290.3 132.8 L289.6 132.8 L288.9 132.8 L288.3 132.7 L287.8 132.7 L287.3 132.7 L286.9 132.6 L286.6 132.6 L286.4 132.5 L286.2 132.5 L286.1 132.5 L286.0 132.4 L286.0 132.4 L286.1 132.3 L286.3 132.3 L286.5 132.2" stroke-linejoin="round" fill="none" stroke="#3a3200" stroke-width="12.5"/><path d="M371.5 106.0 L371.7 106.6 L371.9 107.3 L372.0 108.0 L372.0 108.6 L371.9 109.3 L371.8 109.9 L371.6 110.6 L371.4 111.2 L371.1 111.9 L370.7 112.5 L370.2 113.2 L369.7 113.8 L369.1 114.5 L368.4 115.1 L367.7 115.7 L366.9 116.3 L366.1 116.9 L365.2 117.5 L364.2 118.1 L363.2 118.7 L362.2 119.3 L361.0 119.9 L359.9 120.5 L358.6 121.0 L357.4 121.5 L356.0 122.1 L354.7 122.6 L353.3 123.1 L351.9 123.6 L350.4 124.1 L348.9 124.6 L347.3 125.0 L345.8 125.5 L344.2 125.9 L342.5 126.3 L340.9 126.7 L339.2 127.1 L337.5 127.5 L335.9 127.9 L334.1 128.2 L332.4 128.6 L330.7 128.9 L329.0 129.2 L327.3 129.5 L325.6 129.8 L323.9 130.1 L322.1 130.3 L320.5 130.6 L318.8 130.8 L317.1 131.0 L315.5 131.2 L313.8 131.4 L312.2 131.6 L310.7 131.7 L309.1 131.9 L307.6 132.0 L306.1 132.2 L304.7 132.3 L303.3 132.4 L302.0 132.5 L300.6 132.5 L299.4 132.6 L298.1 132.7 L297.0 132.7 L295.8 132.7 L294.8 132.8 L293.8 132.8 L292.8 132.8 L291.9 132.8 L291.1 132.8 L290.3 132.8 L289.6 132.8 L288.9 132.8 L288.3 132.7 L287.8 132.7 L287.3 132.7 L286.9 132.6 L286.6 132.6 L286.4 132.5 L286.2 132.5 L286.1 132.5 L286.0 132.4 L286.0 132.4 L286.1 132.3 L286.3 132.3 L286.5 132.2" stroke-linejoin="round" fill="none" stroke="#8c7c00" stroke-width="10.8"/><path d="M371.5 106.0 L371.7 106.6 L371.9 107.3 L372.0 108.0 L372.0 108.6 L371.9 109.3 L371.8 109.9 L371.6 110.6 L371.4 111.2 L371.1 111.9 L370.7 112.5 L370.2 113.2 L369.7 113.8 L369.1 114.5 L368.4 115.1 L367.7 115.7 L366.9 116.3 L366.1 116.9 L365.2 117.5 L364.2 118.1 L363.2 118.7 L362.2 119.3 L361.0 119.9 L359.9 120.5 L358.6 121.0 L357.4 121.5 L356.0 122.1 L354.7 122.6 L353.3 123.1 L351.9 123.6 L350.4 124.1 L348.9 124.6 L347.3 125.0 L345.8 125.5 L344.2 125.9 L342.5 126.3 L340.9 126.7 L339.2 127.1 L337.5 127.5 L335.9 127.9 L334.1 128.2 L332.4 128.6 L330.7 128.9 L329.0 129.2 L327.3 129.5 L325.6 129.8 L323.9 130.1 L322.1 130.3 L320.5 130.6 L318.8 130.8 L317.1 131.0 L315.5 131.2 L313.8 131.4 L312.2 131.6 L310.7 131.7 L309.1 131.9 L307.6 132.0 L306.1 132.2 L304.7 132.3 L303.3 132.4 L302.0 132.5 L300.6 132.5 L299.4 132.6 L298.1 132.7 L297.0 132.7 L295.8 132.7 L294.8 132.8 L293.8 132.8 L292.8 132.8 L291.9 132.8 L291.1 132.8 L290.3 132.8 L289.6 132.8 L288.9 132.8 L288.3 132.7 L287.8 132.7 L287.3 132.7 L286.9 132.6 L286.6 132.6 L286.4 132.5 L286.2 132.5 L286.1 132.5 L286.0 132.4 L286.0 132.4 L286.1 132.3 L286.3 132.3 L286.5 132.2" stroke-linejoin="round" fill="none" stroke="#c4b000" stroke-width="8.4" transform="translate(0,-0.8)"/><path d="M371.5 106.0 L371.7 106.6 L371.9 107.3 L372.0 108.0 L372.0 108.6 L371.9 109.3 L371.8 109.9 L371.6 110.6 L371.4 111.2 L371.1 111.9 L370.7 112.5 L370.2 113.2 L369.7 113.8 L369.1 114.5 L368.4 115.1 L367.7 115.7 L366.9 116.3 L366.1 116.9 L365.2 117.5 L364.2 118.1 L363.2 118.7 L362.2 119.3 L361.0 119.9 L359.9 120.5 L358.6 121.0 L357.4 121.5 L356.0 122.1 L354.7 122.6 L353.3 123.1 L351.9 123.6 L350.4 124.1 L348.9 124.6 L347.3 125.0 L345.8 125.5 L344.2 125.9 L342.5 126.3 L340.9 126.7 L339.2 127.1 L337.5 127.5 L335.9 127.9 L334.1 128.2 L332.4 128.6 L330.7 128.9 L329.0 129.2 L327.3 129.5 L325.6 129.8 L323.9 130.1 L322.1 130.3 L320.5 130.6 L318.8 130.8 L317.1 131.0 L315.5 131.2 L313.8 131.4 L312.2 131.6 L310.7 131.7 L309.1 131.9 L307.6 132.0 L306.1 132.2 L304.7 132.3 L303.3 132.4 L302.0 132.5 L300.6 132.5 L299.4 132.6 L298.1 132.7 L297.0 132.7 L295.8 132.7 L294.8 132.8 L293.8 132.8 L292.8 132.8 L291.9 132.8 L291.1 132.8 L290.3 132.8 L289.6 132.8 L288.9 132.8 L288.3 132.7 L287.8 132.7 L287.3 132.7 L286.9 132.6 L286.6 132.6 L286.4 132.5 L286.2 132.5 L286.1 132.5 L286.0 132.4 L286.0 132.4 L286.1 132.3 L286.3 132.3 L286.5 132.2" stroke-linejoin="round" fill="none" stroke="#e8d800" stroke-width="5.6" transform="translate(0,-1.5)"/><path d="M371.5 106.0 L371.7 106.6 L371.9 107.3 L372.0 108.0 L372.0 108.6 L371.9 109.3 L371.8 109.9 L371.6 110.6 L371.4 111.2 L371.1 111.9 L370.7 112.5 L370.2 113.2 L369.7 113.8 L369.1 114.5 L368.4 115.1 L367.7 115.7 L366.9 116.3 L366.1 116.9 L365.2 117.5 L364.2 118.1 L363.2 118.7 L362.2 119.3 L361.0 119.9 L359.9 120.5 L358.6 121.0 L357.4 121.5 L356.0 122.1 L354.7 122.6 L353.3 123.1 L351.9 123.6 L350.4 124.1 L348.9 124.6 L347.3 125.0 L345.8 125.5 L344.2 125.9 L342.5 126.3 L340.9 126.7 L339.2 127.1 L337.5 127.5 L335.9 127.9 L334.1 128.2 L332.4 128.6 L330.7 128.9 L329.0 129.2 L327.3 129.5 L325.6 129.8 L323.9 130.1 L322.1 130.3 L320.5 130.6 L318.8 130.8 L317.1 131.0 L315.5 131.2 L313.8 131.4 L312.2 131.6 L310.7 131.7 L309.1 131.9 L307.6 132.0 L306.1 132.2 L304.7 132.3 L303.3 132.4 L302.0 132.5 L300.6 132.5 L299.4 132.6 L298.1 132.7 L297.0 132.7 L295.8 132.7 L294.8 132.8 L293.8 132.8 L292.8 132.8 L291.9 132.8 L291.1 132.8 L290.3 132.8 L289.6 132.8 L288.9 132.8 L288.3 132.7 L287.8 132.7 L287.3 132.7 L286.9 132.6 L286.6 132.6 L286.4 132.5 L286.2 132.5 L286.1 132.5 L286.0 132.4 L286.0 132.4 L286.1 132.3 L286.3 132.3 L286.5 132.2" stroke-linejoin="round" fill="none" stroke="#fcf000" stroke-width="2.4" transform="translate(0,-2.2)"/><path d="M371.5 153.9 L371.7 154.5 L371.9 155.2 L372.0 155.9 L372.0 156.5 L371.9 157.2 L371.8 157.8 L371.6 158.5 L371.4 159.1 L371.1 159.8 L370.7 160.4 L370.2 161.1 L369.7 161.7 L369.1 162.4 L368.4 163.0 L367.7 163.6 L366.9 164.2 L366.1 164.8 L365.2 165.4 L364.2 166.0 L363.2 166.6 L362.2 167.2 L361.0 167.8 L359.9 168.4 L358.6 168.9 L357.4 169.4 L356.0 170.0 L354.7 170.5 L353.3 171.0 L351.9 171.5 L350.4 172.0 L348.9 172.5 L347.3 172.9 L345.8 173.4 L344.2 173.8 L342.5 174.2 L340.9 174.6 L339.2 175.0 L337.5 175.4 L335.9 175.8 L334.1 176.1 L332.4 176.5 L330.7 176.8 L329.0 177.1 L327.3 177.4 L325.6 177.7 L323.9 178.0 L322.1 178.2 L320.5 178.5 L318.8 178.7 L317.1 178.9 L315.5 179.1 L313.8 179.3 L312.2 179.5 L310.7 179.6 L309.1 179.8 L307.6 179.9 L306.1 180.1 L304.7 180.2 L303.3 180.3 L302.0 180.4 L300.6 180.4 L299.4 180.5 L298.1 180.6 L297.0 180.6 L295.8 180.6 L294.8 180.7 L293.8 180.7 L292.8 180.7 L291.9 180.7 L291.1 180.7 L290.3 180.7 L289.6 180.7 L288.9 180.7 L288.3 180.6 L287.8 180.6 L287.3 180.6 L286.9 180.5 L286.6 180.5 L286.4 180.4 L286.2 180.4 L286.1 180.4 L286.0 180.3 L286.0 180.3 L286.1 180.2 L286.3 180.2 L286.5 180.1" stroke-linejoin="round" fill="none" stroke="#3a3200" stroke-width="12.5"/><path d="M371.5 153.9 L371.7 154.5 L371.9 155.2 L372.0 155.9 L372.0 156.5 L371.9 157.2 L371.8 157.8 L371.6 158.5 L371.4 159.1 L371.1 159.8 L370.7 160.4 L370.2 161.1 L369.7 161.7 L369.1 162.4 L368.4 163.0 L367.7 163.6 L366.9 164.2 L366.1 164.8 L365.2 165.4 L364.2 166.0 L363.2 166.6 L362.2 167.2 L361.0 167.8 L359.9 168.4 L358.6 168.9 L357.4 169.4 L356.0 170.0 L354.7 170.5 L353.3 171.0 L351.9 171.5 L350.4 172.0 L348.9 172.5 L347.3 172.9 L345.8 173.4 L344.2 173.8 L342.5 174.2 L340.9 174.6 L339.2 175.0 L337.5 175.4 L335.9 175.8 L334.1 176.1 L332.4 176.5 L330.7 176.8 L329.0 177.1 L327.3 177.4 L325.6 177.7 L323.9 178.0 L322.1 178.2 L320.5 178.5 L318.8 178.7 L317.1 178.9 L315.5 179.1 L313.8 179.3 L312.2 179.5 L310.7 179.6 L309.1 179.8 L307.6 179.9 L306.1 180.1 L304.7 180.2 L303.3 180.3 L302.0 180.4 L300.6 180.4 L299.4 180.5 L298.1 180.6 L297.0 180.6 L295.8 180.6 L294.8 180.7 L293.8 180.7 L292.8 180.7 L291.9 180.7 L291.1 180.7 L290.3 180.7 L289.6 180.7 L288.9 180.7 L288.3 180.6 L287.8 180.6 L287.3 180.6 L286.9 180.5 L286.6 180.5 L286.4 180.4 L286.2 180.4 L286.1 180.4 L286.0 180.3 L286.0 180.3 L286.1 180.2 L286.3 180.2 L286.5 180.1" stroke-linejoin="round" fill="none" stroke="#8c7c00" stroke-width="10.8"/><path d="M371.5 153.9 L371.7 154.5 L371.9 155.2 L372.0 155.9 L372.0 156.5 L371.9 157.2 L371.8 157.8 L371.6 158.5 L371.4 159.1 L371.1 159.8 L370.7 160.4 L370.2 161.1 L369.7 161.7 L369.1 162.4 L368.4 163.0 L367.7 163.6 L366.9 164.2 L366.1 164.8 L365.2 165.4 L364.2 166.0 L363.2 166.6 L362.2 167.2 L361.0 167.8 L359.9 168.4 L358.6 168.9 L357.4 169.4 L356.0 170.0 L354.7 170.5 L353.3 171.0 L351.9 171.5 L350.4 172.0 L348.9 172.5 L347.3 172.9 L345.8 173.4 L344.2 173.8 L342.5 174.2 L340.9 174.6 L339.2 175.0 L337.5 175.4 L335.9 175.8 L334.1 176.1 L332.4 176.5 L330.7 176.8 L329.0 177.1 L327.3 177.4 L325.6 177.7 L323.9 178.0 L322.1 178.2 L320.5 178.5 L318.8 178.7 L317.1 178.9 L315.5 179.1 L313.8 179.3 L312.2 179.5 L310.7 179.6 L309.1 179.8 L307.6 179.9 L306.1 180.1 L304.7 180.2 L303.3 180.3 L302.0 180.4 L300.6 180.4 L299.4 180.5 L298.1 180.6 L297.0 180.6 L295.8 180.6 L294.8 180.7 L293.8 180.7 L292.8 180.7 L291.9 180.7 L291.1 180.7 L290.3 180.7 L289.6 180.7 L288.9 180.7 L288.3 180.6 L287.8 180.6 L287.3 180.6 L286.9 180.5 L286.6 180.5 L286.4 180.4 L286.2 180.4 L286.1 180.4 L286.0 180.3 L286.0 180.3 L286.1 180.2 L286.3 180.2 L286.5 180.1" stroke-linejoin="round" fill="none" stroke="#c4b000" stroke-width="8.4" transform="translate(0,-0.8)"/><path d="M371.5 153.9 L371.7 154.5 L371.9 155.2 L372.0 155.9 L372.0 156.5 L371.9 157.2 L371.8 157.8 L371.6 158.5 L371.4 159.1 L371.1 159.8 L370.7 160.4 L370.2 161.1 L369.7 161.7 L369.1 162.4 L368.4 163.0 L367.7 163.6 L366.9 164.2 L366.1 164.8 L365.2 165.4 L364.2 166.0 L363.2 166.6 L362.2 167.2 L361.0 167.8 L359.9 168.4 L358.6 168.9 L357.4 169.4 L356.0 170.0 L354.7 170.5 L353.3 171.0 L351.9 171.5 L350.4 172.0 L348.9 172.5 L347.3 172.9 L345.8 173.4 L344.2 173.8 L342.5 174.2 L340.9 174.6 L339.2 175.0 L337.5 175.4 L335.9 175.8 L334.1 176.1 L332.4 176.5 L330.7 176.8 L329.0 177.1 L327.3 177.4 L325.6 177.7 L323.9 178.0 L322.1 178.2 L320.5 178.5 L318.8 178.7 L317.1 178.9 L315.5 179.1 L313.8 179.3 L312.2 179.5 L310.7 179.6 L309.1 179.8 L307.6 179.9 L306.1 180.1 L304.7 180.2 L303.3 180.3 L302.0 180.4 L300.6 180.4 L299.4 180.5 L298.1 180.6 L297.0 180.6 L295.8 180.6 L294.8 180.7 L293.8 180.7 L292.8 180.7 L291.9 180.7 L291.1 180.7 L290.3 180.7 L289.6 180.7 L288.9 180.7 L288.3 180.6 L287.8 180.6 L287.3 180.6 L286.9 180.5 L286.6 180.5 L286.4 180.4 L286.2 180.4 L286.1 180.4 L286.0 180.3 L286.0 180.3 L286.1 180.2 L286.3 180.2 L286.5 180.1" stroke-linejoin="round" fill="none" stroke="#e8d800" stroke-width="5.6" transform="translate(0,-1.5)"/><path d="M371.5 153.9 L371.7 154.5 L371.9 155.2 L372.0 155.9 L372.0 156.5 L371.9 157.2 L371.8 157.8 L371.6 158.5 L371.4 159.1 L371.1 159.8 L370.7 160.4 L370.2 161.1 L369.7 161.7 L369.1 162.4 L368.4 163.0 L367.7 163.6 L366.9 164.2 L366.1 164.8 L365.2 165.4 L364.2 166.0 L363.2 166.6 L362.2 167.2 L361.0 167.8 L359.9 168.4 L358.6 168.9 L357.4 169.4 L356.0 170.0 L354.7 170.5 L353.3 171.0 L351.9 171.5 L350.4 172.0 L348.9 172.5 L347.3 172.9 L345.8 173.4 L344.2 173.8 L342.5 174.2 L340.9 174.6 L339.2 175.0 L337.5 175.4 L335.9 175.8 L334.1 176.1 L332.4 176.5 L330.7 176.8 L329.0 177.1 L327.3 177.4 L325.6 177.7 L323.9 178.0 L322.1 178.2 L320.5 178.5 L318.8 178.7 L317.1 178.9 L315.5 179.1 L313.8 179.3 L312.2 179.5 L310.7 179.6 L309.1 179.8 L307.6 179.9 L306.1 180.1 L304.7 180.2 L303.3 180.3 L302.0 180.4 L300.6 180.4 L299.4 180.5 L298.1 180.6 L297.0 180.6 L295.8 180.6 L294.8 180.7 L293.8 180.7 L292.8 180.7 L291.9 180.7 L291.1 180.7 L290.3 180.7 L289.6 180.7 L288.9 180.7 L288.3 180.6 L287.8 180.6 L287.3 180.6 L286.9 180.5 L286.6 180.5 L286.4 180.4 L286.2 180.4 L286.1 180.4 L286.0 180.3 L286.0 180.3 L286.1 180.2 L286.3 180.2 L286.5 180.1" stroke-linejoin="round" fill="none" stroke="#fcf000" stroke-width="2.4" transform="translate(0,-2.2)"/><path d="M371.5 201.8 L371.7 202.4 L371.9 203.1 L372.0 203.8 L372.0 204.4 L371.9 205.1 L371.8 205.7 L371.6 206.4 L371.4 207.0 L371.1 207.7 L370.7 208.3 L370.2 209.0 L369.7 209.6 L369.1 210.3 L368.4 210.9 L367.7 211.5 L366.9 212.1 L366.1 212.7 L365.2 213.3 L364.2 213.9 L363.2 214.5 L362.2 215.1 L361.0 215.7 L359.9 216.3 L358.6 216.8 L357.4 217.3 L356.0 217.9 L354.7 218.4 L353.3 218.9 L351.9 219.4 L350.4 219.9 L348.9 220.4 L347.3 220.8 L345.8 221.3 L344.2 221.7 L342.5 222.1 L340.9 222.5 L339.2 222.9 L337.5 223.3 L335.9 223.7 L334.1 224.0 L332.4 224.4 L330.7 224.7 L329.0 225.0 L327.3 225.3 L325.6 225.6 L323.9 225.9 L322.1 226.1 L320.5 226.4 L318.8 226.6 L317.1 226.8 L315.5 227.0 L313.8 227.2 L312.2 227.4 L310.7 227.5 L309.1 227.7 L307.6 227.8 L306.1 228.0 L304.7 228.1 L303.3 228.2 L302.0 228.3 L300.6 228.3 L299.4 228.4 L298.1 228.5 L297.0 228.5 L295.8 228.5 L294.8 228.6 L293.8 228.6 L292.8 228.6 L291.9 228.6 L291.1 228.6 L290.3 228.6 L289.6 228.6 L288.9 228.6 L288.3 228.5 L287.8 228.5 L287.3 228.5 L286.9 228.4 L286.6 228.4 L286.4 228.3 L286.2 228.3 L286.1 228.3 L286.0 228.2 L286.0 228.2 L286.1 228.1 L286.3 228.1 L286.5 228.0" stroke-linejoin="round" fill="none" stroke="#3a3200" stroke-width="12.5"/><path d="M371.5 201.8 L371.7 202.4 L371.9 203.1 L372.0 203.8 L372.0 204.4 L371.9 205.1 L371.8 205.7 L371.6 206.4 L371.4 207.0 L371.1 207.7 L370.7 208.3 L370.2 209.0 L369.7 209.6 L369.1 210.3 L368.4 210.9 L367.7 211.5 L366.9 212.1 L366.1 212.7 L365.2 213.3 L364.2 213.9 L363.2 214.5 L362.2 215.1 L361.0 215.7 L359.9 216.3 L358.6 216.8 L357.4 217.3 L356.0 217.9 L354.7 218.4 L353.3 218.9 L351.9 219.4 L350.4 219.9 L348.9 220.4 L347.3 220.8 L345.8 221.3 L344.2 221.7 L342.5 222.1 L340.9 222.5 L339.2 222.9 L337.5 223.3 L335.9 223.7 L334.1 224.0 L332.4 224.4 L330.7 224.7 L329.0 225.0 L327.3 225.3 L325.6 225.6 L323.9 225.9 L322.1 226.1 L320.5 226.4 L318.8 226.6 L317.1 226.8 L315.5 227.0 L313.8 227.2 L312.2 227.4 L310.7 227.5 L309.1 227.7 L307.6 227.8 L306.1 228.0 L304.7 228.1 L303.3 228.2 L302.0 228.3 L300.6 228.3 L299.4 228.4 L298.1 228.5 L297.0 228.5 L295.8 228.5 L294.8 228.6 L293.8 228.6 L292.8 228.6 L291.9 228.6 L291.1 228.6 L290.3 228.6 L289.6 228.6 L288.9 228.6 L288.3 228.5 L287.8 228.5 L287.3 228.5 L286.9 228.4 L286.6 228.4 L286.4 228.3 L286.2 228.3 L286.1 228.3 L286.0 228.2 L286.0 228.2 L286.1 228.1 L286.3 228.1 L286.5 228.0" stroke-linejoin="round" fill="none" stroke="#8c7c00" stroke-width="10.8"/><path d="M371.5 201.8 L371.7 202.4 L371.9 203.1 L372.0 203.8 L372.0 204.4 L371.9 205.1 L371.8 205.7 L371.6 206.4 L371.4 207.0 L371.1 207.7 L370.7 208.3 L370.2 209.0 L369.7 209.6 L369.1 210.3 L368.4 210.9 L367.7 211.5 L366.9 212.1 L366.1 212.7 L365.2 213.3 L364.2 213.9 L363.2 214.5 L362.2 215.1 L361.0 215.7 L359.9 216.3 L358.6 216.8 L357.4 217.3 L356.0 217.9 L354.7 218.4 L353.3 218.9 L351.9 219.4 L350.4 219.9 L348.9 220.4 L347.3 220.8 L345.8 221.3 L344.2 221.7 L342.5 222.1 L340.9 222.5 L339.2 222.9 L337.5 223.3 L335.9 223.7 L334.1 224.0 L332.4 224.4 L330.7 224.7 L329.0 225.0 L327.3 225.3 L325.6 225.6 L323.9 225.9 L322.1 226.1 L320.5 226.4 L318.8 226.6 L317.1 226.8 L315.5 227.0 L313.8 227.2 L312.2 227.4 L310.7 227.5 L309.1 227.7 L307.6 227.8 L306.1 228.0 L304.7 228.1 L303.3 228.2 L302.0 228.3 L300.6 228.3 L299.4 228.4 L298.1 228.5 L297.0 228.5 L295.8 228.5 L294.8 228.6 L293.8 228.6 L292.8 228.6 L291.9 228.6 L291.1 228.6 L290.3 228.6 L289.6 228.6 L288.9 228.6 L288.3 228.5 L287.8 228.5 L287.3 228.5 L286.9 228.4 L286.6 228.4 L286.4 228.3 L286.2 228.3 L286.1 228.3 L286.0 228.2 L286.0 228.2 L286.1 228.1 L286.3 228.1 L286.5 228.0" stroke-linejoin="round" fill="none" stroke="#c4b000" stroke-width="8.4" transform="translate(0,-0.8)"/><path d="M371.5 201.8 L371.7 202.4 L371.9 203.1 L372.0 203.8 L372.0 204.4 L371.9 205.1 L371.8 205.7 L371.6 206.4 L371.4 207.0 L371.1 207.7 L370.7 208.3 L370.2 209.0 L369.7 209.6 L369.1 210.3 L368.4 210.9 L367.7 211.5 L366.9 212.1 L366.1 212.7 L365.2 213.3 L364.2 213.9 L363.2 214.5 L362.2 215.1 L361.0 215.7 L359.9 216.3 L358.6 216.8 L357.4 217.3 L356.0 217.9 L354.7 218.4 L353.3 218.9 L351.9 219.4 L350.4 219.9 L348.9 220.4 L347.3 220.8 L345.8 221.3 L344.2 221.7 L342.5 222.1 L340.9 222.5 L339.2 222.9 L337.5 223.3 L335.9 223.7 L334.1 224.0 L332.4 224.4 L330.7 224.7 L329.0 225.0 L327.3 225.3 L325.6 225.6 L323.9 225.9 L322.1 226.1 L320.5 226.4 L318.8 226.6 L317.1 226.8 L315.5 227.0 L313.8 227.2 L312.2 227.4 L310.7 227.5 L309.1 227.7 L307.6 227.8 L306.1 228.0 L304.7 228.1 L303.3 228.2 L302.0 228.3 L300.6 228.3 L299.4 228.4 L298.1 228.5 L297.0 228.5 L295.8 228.5 L294.8 228.6 L293.8 228.6 L292.8 228.6 L291.9 228.6 L291.1 228.6 L290.3 228.6 L289.6 228.6 L288.9 228.6 L288.3 228.5 L287.8 228.5 L287.3 228.5 L286.9 228.4 L286.6 228.4 L286.4 228.3 L286.2 228.3 L286.1 228.3 L286.0 228.2 L286.0 228.2 L286.1 228.1 L286.3 228.1 L286.5 228.0" stroke-linejoin="round" fill="none" stroke="#e8d800" stroke-width="5.6" transform="translate(0,-1.5)"/><path d="M371.5 201.8 L371.7 202.4 L371.9 203.1 L372.0 203.8 L372.0 204.4 L371.9 205.1 L371.8 205.7 L371.6 206.4 L371.4 207.0 L371.1 207.7 L370.7 208.3 L370.2 209.0 L369.7 209.6 L369.1 210.3 L368.4 210.9 L367.7 211.5 L366.9 212.1 L366.1 212.7 L365.2 213.3 L364.2 213.9 L363.2 214.5 L362.2 215.1 L361.0 215.7 L359.9 216.3 L358.6 216.8 L357.4 217.3 L356.0 217.9 L354.7 218.4 L353.3 218.9 L351.9 219.4 L350.4 219.9 L348.9 220.4 L347.3 220.8 L345.8 221.3 L344.2 221.7 L342.5 222.1 L340.9 222.5 L339.2 222.9 L337.5 223.3 L335.9 223.7 L334.1 224.0 L332.4 224.4 L330.7 224.7 L329.0 225.0 L327.3 225.3 L325.6 225.6 L323.9 225.9 L322.1 226.1 L320.5 226.4 L318.8 226.6 L317.1 226.8 L315.5 227.0 L313.8 227.2 L312.2 227.4 L310.7 227.5 L309.1 227.7 L307.6 227.8 L306.1 228.0 L304.7 228.1 L303.3 228.2 L302.0 228.3 L300.6 228.3 L299.4 228.4 L298.1 228.5 L297.0 228.5 L295.8 228.5 L294.8 228.6 L293.8 228.6 L292.8 228.6 L291.9 228.6 L291.1 228.6 L290.3 228.6 L289.6 228.6 L288.9 228.6 L288.3 228.5 L287.8 228.5 L287.3 228.5 L286.9 228.4 L286.6 228.4 L286.4 228.3 L286.2 228.3 L286.1 228.3 L286.0 228.2 L286.0 228.2 L286.1 228.1 L286.3 228.1 L286.5 228.0" stroke-linejoin="round" fill="none" stroke="#fcf000" stroke-width="2.4" transform="translate(0,-2.2)"/><path d="M371.5 249.7 L371.7 250.3 L371.9 251.0 L372.0 251.7 L372.0 252.3 L371.9 253.0 L371.8 253.6 L371.6 254.3 L371.4 254.9 L371.1 255.6 L370.7 256.2 L370.2 256.9 L369.7 257.5 L369.1 258.2 L368.4 258.8 L367.7 259.4 L366.9 260.0 L366.1 260.6 L365.2 261.2 L364.2 261.8 L363.2 262.4 L362.2 263.0 L361.0 263.6 L359.9 264.2 L358.6 264.7 L357.4 265.2 L356.0 265.8 L354.7 266.3 L353.3 266.8 L351.9 267.3 L350.4 267.8 L348.9 268.3 L347.3 268.7 L345.8 269.2 L344.2 269.6 L342.5 270.0 L340.9 270.4 L339.2 270.8 L337.5 271.2 L335.9 271.6 L334.1 271.9 L332.4 272.3 L330.7 272.6 L329.0 272.9 L327.3 273.2 L325.6 273.5 L323.9 273.8 L322.1 274.0 L320.5 274.3 L318.8 274.5 L317.1 274.7 L315.5 274.9 L313.8 275.1 L312.2 275.3 L310.7 275.4 L309.1 275.6 L307.6 275.7 L306.1 275.9 L304.7 276.0 L303.3 276.1 L302.0 276.2 L300.6 276.2 L299.4 276.3 L298.1 276.4 L297.0 276.4 L295.8 276.4 L294.8 276.5 L293.8 276.5 L292.8 276.5 L291.9 276.5 L291.1 276.5 L290.3 276.5 L289.6 276.5 L288.9 276.5 L288.3 276.4 L287.8 276.4 L287.3 276.4 L286.9 276.3 L286.6 276.3 L286.4 276.2 L286.2 276.2 L286.1 276.2 L286.0 276.1 L286.0 276.1 L286.1 276.0 L286.3 276.0 L286.5 275.9" stroke-linejoin="round" fill="none" stroke="#3a3200" stroke-width="12.5"/><path d="M371.5 249.7 L371.7 250.3 L371.9 251.0 L372.0 251.7 L372.0 252.3 L371.9 253.0 L371.8 253.6 L371.6 254.3 L371.4 254.9 L371.1 255.6 L370.7 256.2 L370.2 256.9 L369.7 257.5 L369.1 258.2 L368.4 258.8 L367.7 259.4 L366.9 260.0 L366.1 260.6 L365.2 261.2 L364.2 261.8 L363.2 262.4 L362.2 263.0 L361.0 263.6 L359.9 264.2 L358.6 264.7 L357.4 265.2 L356.0 265.8 L354.7 266.3 L353.3 266.8 L351.9 267.3 L350.4 267.8 L348.9 268.3 L347.3 268.7 L345.8 269.2 L344.2 269.6 L342.5 270.0 L340.9 270.4 L339.2 270.8 L337.5 271.2 L335.9 271.6 L334.1 271.9 L332.4 272.3 L330.7 272.6 L329.0 272.9 L327.3 273.2 L325.6 273.5 L323.9 273.8 L322.1 274.0 L320.5 274.3 L318.8 274.5 L317.1 274.7 L315.5 274.9 L313.8 275.1 L312.2 275.3 L310.7 275.4 L309.1 275.6 L307.6 275.7 L306.1 275.9 L304.7 276.0 L303.3 276.1 L302.0 276.2 L300.6 276.2 L299.4 276.3 L298.1 276.4 L297.0 276.4 L295.8 276.4 L294.8 276.5 L293.8 276.5 L292.8 276.5 L291.9 276.5 L291.1 276.5 L290.3 276.5 L289.6 276.5 L288.9 276.5 L288.3 276.4 L287.8 276.4 L287.3 276.4 L286.9 276.3 L286.6 276.3 L286.4 276.2 L286.2 276.2 L286.1 276.2 L286.0 276.1 L286.0 276.1 L286.1 276.0 L286.3 276.0 L286.5 275.9" stroke-linejoin="round" fill="none" stroke="#8c7c00" stroke-width="10.8"/><path d="M371.5 249.7 L371.7 250.3 L371.9 251.0 L372.0 251.7 L372.0 252.3 L371.9 253.0 L371.8 253.6 L371.6 254.3 L371.4 254.9 L371.1 255.6 L370.7 256.2 L370.2 256.9 L369.7 257.5 L369.1 258.2 L368.4 258.8 L367.7 259.4 L366.9 260.0 L366.1 260.6 L365.2 261.2 L364.2 261.8 L363.2 262.4 L362.2 263.0 L361.0 263.6 L359.9 264.2 L358.6 264.7 L357.4 265.2 L356.0 265.8 L354.7 266.3 L353.3 266.8 L351.9 267.3 L350.4 267.8 L348.9 268.3 L347.3 268.7 L345.8 269.2 L344.2 269.6 L342.5 270.0 L340.9 270.4 L339.2 270.8 L337.5 271.2 L335.9 271.6 L334.1 271.9 L332.4 272.3 L330.7 272.6 L329.0 272.9 L327.3 273.2 L325.6 273.5 L323.9 273.8 L322.1 274.0 L320.5 274.3 L318.8 274.5 L317.1 274.7 L315.5 274.9 L313.8 275.1 L312.2 275.3 L310.7 275.4 L309.1 275.6 L307.6 275.7 L306.1 275.9 L304.7 276.0 L303.3 276.1 L302.0 276.2 L300.6 276.2 L299.4 276.3 L298.1 276.4 L297.0 276.4 L295.8 276.4 L294.8 276.5 L293.8 276.5 L292.8 276.5 L291.9 276.5 L291.1 276.5 L290.3 276.5 L289.6 276.5 L288.9 276.5 L288.3 276.4 L287.8 276.4 L287.3 276.4 L286.9 276.3 L286.6 276.3 L286.4 276.2 L286.2 276.2 L286.1 276.2 L286.0 276.1 L286.0 276.1 L286.1 276.0 L286.3 276.0 L286.5 275.9" stroke-linejoin="round" fill="none" stroke="#c4b000" stroke-width="8.4" transform="translate(0,-0.8)"/><path d="M371.5 249.7 L371.7 250.3 L371.9 251.0 L372.0 251.7 L372.0 252.3 L371.9 253.0 L371.8 253.6 L371.6 254.3 L371.4 254.9 L371.1 255.6 L370.7 256.2 L370.2 256.9 L369.7 257.5 L369.1 258.2 L368.4 258.8 L367.7 259.4 L366.9 260.0 L366.1 260.6 L365.2 261.2 L364.2 261.8 L363.2 262.4 L362.2 263.0 L361.0 263.6 L359.9 264.2 L358.6 264.7 L357.4 265.2 L356.0 265.8 L354.7 266.3 L353.3 266.8 L351.9 267.3 L350.4 267.8 L348.9 268.3 L347.3 268.7 L345.8 269.2 L344.2 269.6 L342.5 270.0 L340.9 270.4 L339.2 270.8 L337.5 271.2 L335.9 271.6 L334.1 271.9 L332.4 272.3 L330.7 272.6 L329.0 272.9 L327.3 273.2 L325.6 273.5 L323.9 273.8 L322.1 274.0 L320.5 274.3 L318.8 274.5 L317.1 274.7 L315.5 274.9 L313.8 275.1 L312.2 275.3 L310.7 275.4 L309.1 275.6 L307.6 275.7 L306.1 275.9 L304.7 276.0 L303.3 276.1 L302.0 276.2 L300.6 276.2 L299.4 276.3 L298.1 276.4 L297.0 276.4 L295.8 276.4 L294.8 276.5 L293.8 276.5 L292.8 276.5 L291.9 276.5 L291.1 276.5 L290.3 276.5 L289.6 276.5 L288.9 276.5 L288.3 276.4 L287.8 276.4 L287.3 276.4 L286.9 276.3 L286.6 276.3 L286.4 276.2 L286.2 276.2 L286.1 276.2 L286.0 276.1 L286.0 276.1 L286.1 276.0 L286.3 276.0 L286.5 275.9" stroke-linejoin="round" fill="none" stroke="#e8d800" stroke-width="5.6" transform="translate(0,-1.5)"/><path d="M371.5 249.7 L371.7 250.3 L371.9 251.0 L372.0 251.7 L372.0 252.3 L371.9 253.0 L371.8 253.6 L371.6 254.3 L371.4 254.9 L371.1 255.6 L370.7 256.2 L370.2 256.9 L369.7 257.5 L369.1 258.2 L368.4 258.8 L367.7 259.4 L366.9 260.0 L366.1 260.6 L365.2 261.2 L364.2 261.8 L363.2 262.4 L362.2 263.0 L361.0 263.6 L359.9 264.2 L358.6 264.7 L357.4 265.2 L356.0 265.8 L354.7 266.3 L353.3 266.8 L351.9 267.3 L350.4 267.8 L348.9 268.3 L347.3 268.7 L345.8 269.2 L344.2 269.6 L342.5 270.0 L340.9 270.4 L339.2 270.8 L337.5 271.2 L335.9 271.6 L334.1 271.9 L332.4 272.3 L330.7 272.6 L329.0 272.9 L327.3 273.2 L325.6 273.5 L323.9 273.8 L322.1 274.0 L320.5 274.3 L318.8 274.5 L317.1 274.7 L315.5 274.9 L313.8 275.1 L312.2 275.3 L310.7 275.4 L309.1 275.6 L307.6 275.7 L306.1 275.9 L304.7 276.0 L303.3 276.1 L302.0 276.2 L300.6 276.2 L299.4 276.3 L298.1 276.4 L297.0 276.4 L295.8 276.4 L294.8 276.5 L293.8 276.5 L292.8 276.5 L291.9 276.5 L291.1 276.5 L290.3 276.5 L289.6 276.5 L288.9 276.5 L288.3 276.4 L287.8 276.4 L287.3 276.4 L286.9 276.3 L286.6 276.3 L286.4 276.2 L286.2 276.2 L286.1 276.2 L286.0 276.1 L286.0 276.1 L286.1 276.0 L286.3 276.0 L286.5 275.9" stroke-linejoin="round" fill="none" stroke="#fcf000" stroke-width="2.4" transform="translate(0,-2.2)"/><path d="M371.5 297.6 L371.7 298.3 L371.9 298.9 L372.0 299.6 L372.0 300.3 L371.9 300.9 L371.8 301.6 L371.6 302.3 L371.3 302.9 L371.0 303.6 L370.6 304.2 L370.1 304.9 L369.6 305.5 L369.0 306.2 L368.3 306.8 L367.5 307.5 L366.7 308.1 L365.9 308.7 L364.9 309.3 L363.9 309.9 L362.9 310.5 L361.8 311.1 L360.6 311.7 L359.4 312.2 L358.2 312.8 L356.9 313.4 L355.5 313.9 L354.1 314.4 L352.7 314.9 L351.2 315.4 L349.7 315.9 L348.1 316.4 L346.6 316.8 L345.0 317.3 L343.3 317.7 L341.7 318.2 L340.0 318.6 L338.3 319.0 L336.6 319.3 L334.8 319.7 L333.1 320.1 L331.4 320.4 L329.6 320.7 L327.9 321.0 L326.1 321.3 L324.4 321.6 L322.7 321.9 L320.9 322.1 L319.2 322.3" stroke-linejoin="round" fill="none" stroke="#3a3200" stroke-width="12.5"/><path d="M371.5 297.6 L371.7 298.3 L371.9 298.9 L372.0 299.6 L372.0 300.3 L371.9 300.9 L371.8 301.6 L371.6 302.3 L371.3 302.9 L371.0 303.6 L370.6 304.2 L370.1 304.9 L369.6 305.5 L369.0 306.2 L368.3 306.8 L367.5 307.5 L366.7 308.1 L365.9 308.7 L364.9 309.3 L363.9 309.9 L362.9 310.5 L361.8 311.1 L360.6 311.7 L359.4 312.2 L358.2 312.8 L356.9 313.4 L355.5 313.9 L354.1 314.4 L352.7 314.9 L351.2 315.4 L349.7 315.9 L348.1 316.4 L346.6 316.8 L345.0 317.3 L343.3 317.7 L341.7 318.2 L340.0 318.6 L338.3 319.0 L336.6 319.3 L334.8 319.7 L333.1 320.1 L331.4 320.4 L329.6 320.7 L327.9 321.0 L326.1 321.3 L324.4 321.6 L322.7 321.9 L320.9 322.1 L319.2 322.3" stroke-linejoin="round" fill="none" stroke="#8c7c00" stroke-width="10.8"/><path d="M371.5 297.6 L371.7 298.3 L371.9 298.9 L372.0 299.6 L372.0 300.3 L371.9 300.9 L371.8 301.6 L371.6 302.3 L371.3 302.9 L371.0 303.6 L370.6 304.2 L370.1 304.9 L369.6 305.5 L369.0 306.2 L368.3 306.8 L367.5 307.5 L366.7 308.1 L365.9 308.7 L364.9 309.3 L363.9 309.9 L362.9 310.5 L361.8 311.1 L360.6 311.7 L359.4 312.2 L358.2 312.8 L356.9 313.4 L355.5 313.9 L354.1 314.4 L352.7 314.9 L351.2 315.4 L349.7 315.9 L348.1 316.4 L346.6 316.8 L345.0 317.3 L343.3 317.7 L341.7 318.2 L340.0 318.6 L338.3 319.0 L336.6 319.3 L334.8 319.7 L333.1 320.1 L331.4 320.4 L329.6 320.7 L327.9 321.0 L326.1 321.3 L324.4 321.6 L322.7 321.9 L320.9 322.1 L319.2 322.3" stroke-linejoin="round" fill="none" stroke="#c4b000" stroke-width="8.4" transform="translate(0,-0.8)"/><path d="M371.5 297.6 L371.7 298.3 L371.9 298.9 L372.0 299.6 L372.0 300.3 L371.9 300.9 L371.8 301.6 L371.6 302.3 L371.3 302.9 L371.0 303.6 L370.6 304.2 L370.1 304.9 L369.6 305.5 L369.0 306.2 L368.3 306.8 L367.5 307.5 L366.7 308.1 L365.9 308.7 L364.9 309.3 L363.9 309.9 L362.9 310.5 L361.8 311.1 L360.6 311.7 L359.4 312.2 L358.2 312.8 L356.9 313.4 L355.5 313.9 L354.1 314.4 L352.7 314.9 L351.2 315.4 L349.7 315.9 L348.1 316.4 L346.6 316.8 L345.0 317.3 L343.3 317.7 L341.7 318.2 L340.0 318.6 L338.3 319.0 L336.6 319.3 L334.8 319.7 L333.1 320.1 L331.4 320.4 L329.6 320.7 L327.9 321.0 L326.1 321.3 L324.4 321.6 L322.7 321.9 L320.9 322.1 L319.2 322.3" stroke-linejoin="round" fill="none" stroke="#e8d800" stroke-width="5.6" transform="translate(0,-1.5)"/><path d="M371.5 297.6 L371.7 298.3 L371.9 298.9 L372.0 299.6 L372.0 300.3 L371.9 300.9 L371.8 301.6 L371.6 302.3 L371.3 302.9 L371.0 303.6 L370.6 304.2 L370.1 304.9 L369.6 305.5 L369.0 306.2 L368.3 306.8 L367.5 307.5 L366.7 308.1 L365.9 308.7 L364.9 309.3 L363.9 309.9 L362.9 310.5 L361.8 311.1 L360.6 311.7 L359.4 312.2 L358.2 312.8 L356.9 313.4 L355.5 313.9 L354.1 314.4 L352.7 314.9 L351.2 315.4 L349.7 315.9 L348.1 316.4 L346.6 316.8 L345.0 317.3 L343.3 317.7 L341.7 318.2 L340.0 318.6 L338.3 319.0 L336.6 319.3 L334.8 319.7 L333.1 320.1 L331.4 320.4 L329.6 320.7 L327.9 321.0 L326.1 321.3 L324.4 321.6 L322.7 321.9 L320.9 322.1 L319.2 322.3" stroke-linejoin="round" fill="none" stroke="#fcf000" stroke-width="2.4" transform="translate(0,-2.2)"/><polygon points="252.0,75.0 283.0,64.3 399.6,66.4 399.6,72.0 380.8,83.3 252.0,80.3" fill="#000050"/><polygon points="252.0,75.0 380.8,77.5 380.8,83.3 252.0,80.8" fill="#0000ff"/><polygon points="303.0,75.0 319.0,70.5 322.0,72.0 320.0,75.5" fill="#d8c000"/><line x1="329.5" y1="40" x2="329.5" y2="71" stroke="#0000ff" stroke-width="3"/></svg></div><div class="a" style="left:281px;top:749px;width:663px;height:1px;background:#c4c4c4"></div><div class="a" style="left:944px;top:113px;width:2px;height:637px;background:#fff"></div><div class="a" style="left:946px;top:114px;width:326px;height:636px;background:#f0f0f0;border-left:1px solid #a0a0a0"></div><div class="a" style="left:947px;top:114px;width:324px;height:14px;background:linear-gradient(#cfcfcf,#f0f0f0)"></div><div class="a" style="left:1270px;top:114px;width:2px;height:636px;background:#a0a0a0"></div><svg style="left:1259px;top:113px" width="10" height="4" viewBox="0 0 10 4"><path d="M0.5 0 L1 3 L3 1.5 M6 3.5 H9 M7.5 3.5 V1 M7 0.5 h1" fill="none" stroke="#302850" stroke-width="1.2"/></svg><div class="t" style="left:955px;top:134px">Имя:</div><div class="inp" style="left:996px;top:130px;width:168px;height:21px"></div><div class="t" style="left:999px;top:133px">Внешняя сила</div><svg style="left:1178px;top:133px" width="14" height="14" viewBox="0 0 14 14"><path d="M7 0 V14 M0 7 H14" stroke="#000" stroke-width="3"/></svg><svg style="left:1207px;top:130px" width="19" height="19" viewBox="0 0 19 19"><rect x="0.5" y="0.5" width="14" height="14" fill="#fff" stroke="#000"/><rect x="3.5" y="3.5" width="14" height="14" fill="#fff" stroke="#000" stroke-width="1.2"/><path d="M10.5 6 V15 M6 10.5 H15" stroke="#000" stroke-width="2.6"/></svg><svg style="left:1241px;top:131px" width="13" height="16" viewBox="0 0 13 16"><path d="M1.5 4 L2.5 15 H10.5 L11.5 4" fill="#fff" stroke="#000" stroke-width="1.4"/><ellipse cx="6.5" cy="3" rx="5.8" ry="2" fill="#888" stroke="#000" stroke-width="1.2"/><rect x="5" y="0" width="3" height="1.5" fill="#333"/><path d="M4.5 6 V13.5 M6.5 6 V13.5 M8.5 6 V13.5" stroke="#777" stroke-width="0.9"/></svg><div class="a" style="left:953px;top:166px;width:311px;height:36px;border:1px solid #dcdcdc"></div><div class="t" style="left:958px;top:160px;background:#f0f0f0;padding:0 2px">Комментарий/Текстовый атрибут С</div><div class="inp" style="left:957px;top:176px;width:303px;height:21px"></div><div class="t" style="left:957px;top:211px">Тело1:</div><div class="t" style="left:1114px;top:211px">Тело2:</div><div class="inp" style="left:952px;top:225px;width:154px;height:21px"></div><div class="t" style="left:954px;top:229px">Brick</div><div class="a" style="left:1088px;top:227px;width:16px;height:17px;background:#e1e1e1;border:1px solid #adadad"></div><svg style="left:1092px;top:233px" width="8" height="5" viewBox="0 0 8 5"><path d="M0 0 H8 L4 4.5 Z" fill="#000"/></svg><div class="inp" style="left:1110px;top:225px;width:154px;height:21px"></div><div class="t" style="left:1112px;top:229px">Top</div><div class="a" style="left:1246px;top:227px;width:16px;height:17px;background:#e1e1e1;border:1px solid #adadad"></div><svg style="left:1250px;top:233px" width="8" height="5" viewBox="0 0 8 5"><path d="M0 0 H8 L4 4.5 Z" fill="#000"/></svg><div class="t" style="left:954px;top:257px">ГО:</div><div class="a" style="left:997px;top:253px;width:267px;height:21px;background:#e5e5e5;border:1px solid #adadad"></div><div class="t" style="left:1001px;top:257px">Brick</div><svg style="left:1250px;top:260px" width="10" height="6" viewBox="0 0 10 6"><path d="M0.5 0.5 L5 5 L9.5 0.5" fill="none" stroke="#333" stroke-width="1"/></svg><div class="a" style="left:951px;top:285px;width:13px;height:13px;background:#fff;border:1px solid #333"></div><svg style="left:953px;top:287px" width="9" height="9" viewBox="0 0 9 9"><path d="M0.5 4.5 L3.5 7.5 L8.5 1" fill="none" stroke="#000" stroke-width="1.3"/></svg><div class="t" style="left:967px;top:285px">Автоопределение</div><div class="a" style="left:951px;top:309px;width:313px;height:98px;border:1px solid #dcdcdc"></div><div class="t" style="left:956px;top:302px;background:#f0f0f0;padding:0 2px">Точки прикрепления</div><svg style="left:960px;top:318px" width="13" height="18" viewBox="0 0 13 18"><rect x="0.5" y="0.5" width="6" height="6" fill="#f0e000" stroke="#6b5b00"/><path d="M3 3 L3 15 L5.5 12.5 L8 17 L9.5 16 L7.5 11.5 L11 11.5 Z" fill="#fff" stroke="#000"/></svg><div class="t" style="left:979px;top:325px">Brick:</div><svg style="left:960px;top:362px" width="13" height="18" viewBox="0 0 13 18"><rect x="0.5" y="0.5" width="6" height="6" fill="#f0e000" stroke="#6b5b00"/><path d="M3 3 L3 15 L5.5 12.5 L8 17 L9.5 16 L7.5 11.5 L11 11.5 Z" fill="#fff" stroke="#000"/></svg><div class="t" style="left:979px;top:369px">Top:</div><div class="inp" style="left:955px;top:339px;width:100px;height:21px"></div><div class="cc" style="left:1042px;top:341px">C</div><div class="inp" style="left:1058px;top:339px;width:100px;height:21px"></div><div class="cc" style="left:1145px;top:341px">C</div><div class="inp" style="left:1161px;top:339px;width:100px;height:21px"></div><div class="cc" style="left:1248px;top:341px">C</div><div class="inp" style="left:955px;top:383px;width:100px;height:21px"></div><div class="cc" style="left:1042px;top:385px">C</div><div class="inp" style="left:1058px;top:383px;width:100px;height:21px"></div><div class="cc" style="left:1145px;top:385px">C</div><div class="inp" style="left:1161px;top:383px;width:100px;height:21px"></div><div class="cc" style="left:1248px;top:385px">C</div><div class="t" style="left:957px;top:413px">Длина</div><div class="t" style="left:1009px;top:413px">0</div><div class="a" style="left:953px;top:431px;width:311px;height:22px;background:#e5e5e5;border:1px solid #adadad"></div><svg style="left:957px;top:434px" width="14" height="15" viewBox="0 0 14 15"><path d="M2 1 V13 H13 M2 13 L11 4" fill="none" stroke="#1e88e5" stroke-width="1.4"/><path d="M0 4 L2 0.5 L4 4 M10 11 L13.5 13 L10 15 M8 3.5 L11.5 3.5 L11 7" fill="none" stroke="#1e88e5" stroke-width="1.3"/></svg><div class="t" style="left:975px;top:436px">Линейный</div><svg style="left:1250px;top:439px" width="10" height="6" viewBox="0 0 10 6"><path d="M0.5 0.5 L5 5 L9.5 0.5" fill="none" stroke="#333" stroke-width="1"/></svg><div class="t" style="left:954px;top:465px;font-size:12px;letter-spacing:0.6px">F=<b>F0</b>-<b>c</b>*(x-<b>x0</b>) - <b>d</b>* v + <b>Q</b>*sin(<b>w</b>*t+<b>a</b>)</div><div class="t" style="left:954px;top:493px">Сила (F0):</div><div class="inp" style="left:1073px;top:489px;width:190px;height:21px"></div><div class="t" style="left:1075px;top:492px">fz</div><div class="cc" style="left:1250px;top:491px">C</div><div class="t" style="left:954px;top:517px">Коэф. жесткости (c):</div><div class="inp" style="left:1073px;top:513px;width:190px;height:21px"></div><div class="t" style="left:1075px;top:516px">0</div><div class="cc" style="left:1250px;top:515px">C</div><div class="t" style="left:954px;top:542px">Координата (x0):</div><div class="inp" style="left:1073px;top:538px;width:190px;height:21px"></div><div class="t" style="left:1075px;top:541px">0</div><div class="cc" style="left:1250px;top:540px">C</div><div class="t" style="left:954px;top:565px">Коэф. диссипации (d):</div><div class="inp" style="left:1073px;top:561px;width:190px;height:21px"></div><div class="t" style="left:1075px;top:564px">0</div><div class="cc" style="left:1250px;top:563px">C</div><div class="t" style="left:954px;top:589px">Амплитуда (Q):</div><div class="inp" style="left:1073px;top:585px;width:190px;height:21px"></div><div class="t" style="left:1075px;top:588px">fx</div><div class="cc" style="left:1250px;top:587px">C</div><div class="t" style="left:954px;top:614px">Частота (w):</div><div class="inp" style="left:1073px;top:610px;width:190px;height:21px"></div><div class="t" style="left:1075px;top:613px">fx</div><div class="cc" style="left:1250px;top:612px">C</div><div class="t" style="left:954px;top:638px">Начальная фаза (a):</div><div class="inp" style="left:1073px;top:634px;width:190px;height:21px"></div><div class="t" style="left:1075px;top:637px">0</div><div class="cc" style="left:1250px;top:636px">C</div></body></html>
